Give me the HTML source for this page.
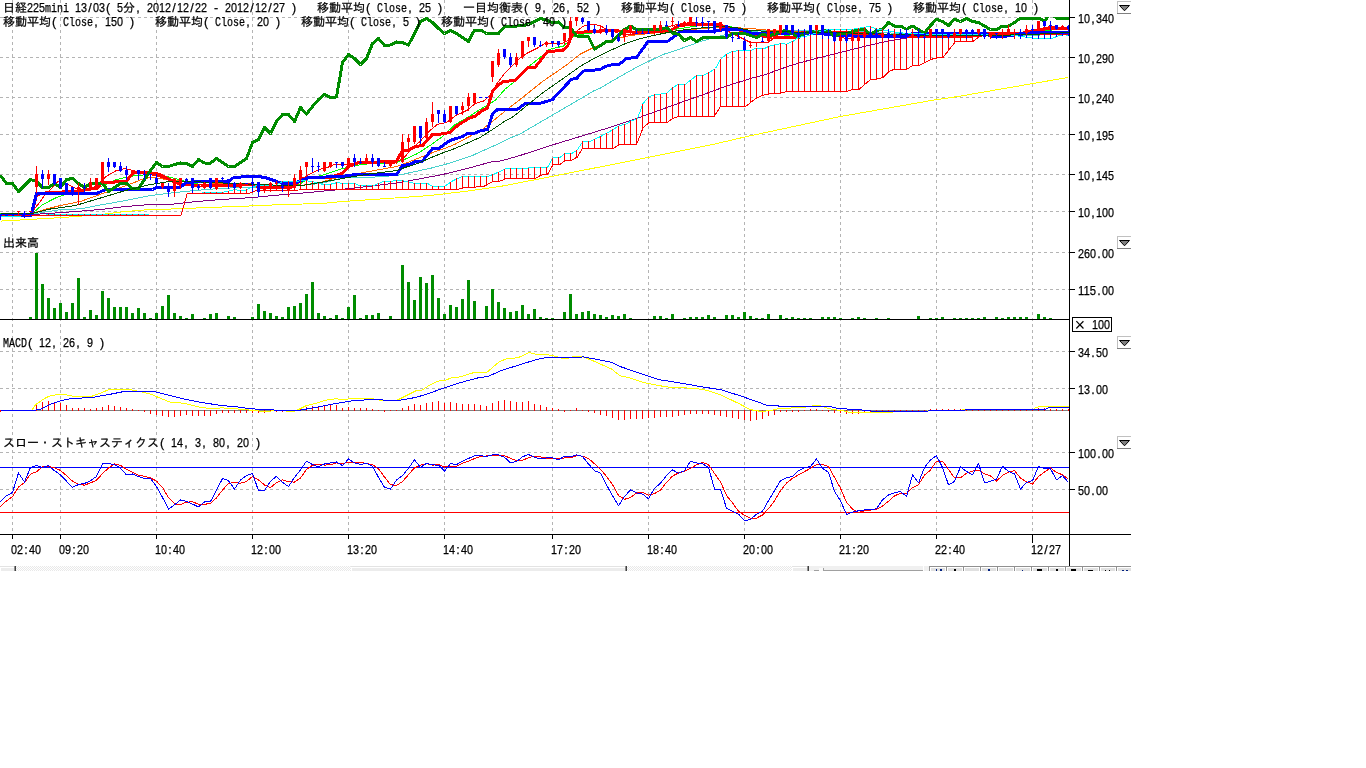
<!DOCTYPE html>
<html lang="ja"><head><meta charset="utf-8"><title>日経225mini 13/03 チャート</title>
<style>
html,body{margin:0;padding:0;background:#fff}
body{width:1366px;height:768px;overflow:hidden;position:relative}
svg{position:absolute;left:0;top:0;display:block}
text{font-family:"Liberation Mono","IPAGothic",monospace;font-size:12px;fill:#000;stroke:#000;stroke-width:.25px}
tspan.x{font-size:18px;stroke-width:0}
tspan.d,tspan.p{font-family:"Liberation Sans","IPAGothic",sans-serif;font-size:12.5px}
</style></head><body>
<svg width="1366" height="768" viewBox="0 0 1366 768">
<defs><clipPath id="all"><rect x="0" y="0" width="1131" height="571"/></clipPath>
<clipPath id="plot"><rect x="0" y="0" width="1069" height="534"/></clipPath>
<clipPath id="main"><rect x="0" y="17" width="1069" height="217"/></clipPath>
<pattern id="chk" width="2" height="2" patternUnits="userSpaceOnUse"><rect width="2" height="2" fill="#fff"/><rect width="1" height="1" fill="#e8e8e8"/><rect x="1" y="1" width="1" height="1" fill="#e8e8e8"/></pattern>
</defs>
<g clip-path="url(#all)">
<g shape-rendering="crispEdges">
<line x1="12.5" y1="0" x2="12.5" y2="534" stroke="#b4b4b4" stroke-width="1" stroke-dasharray="3 3"/>
<line x1="60.5" y1="0" x2="60.5" y2="534" stroke="#b4b4b4" stroke-width="1" stroke-dasharray="3 3"/>
<line x1="156.5" y1="0" x2="156.5" y2="534" stroke="#b4b4b4" stroke-width="1" stroke-dasharray="3 3"/>
<line x1="252.5" y1="0" x2="252.5" y2="534" stroke="#b4b4b4" stroke-width="1" stroke-dasharray="3 3"/>
<line x1="348.5" y1="0" x2="348.5" y2="534" stroke="#b4b4b4" stroke-width="1" stroke-dasharray="3 3"/>
<line x1="444.5" y1="0" x2="444.5" y2="534" stroke="#b4b4b4" stroke-width="1" stroke-dasharray="3 3"/>
<line x1="552.5" y1="0" x2="552.5" y2="534" stroke="#b4b4b4" stroke-width="1" stroke-dasharray="3 3"/>
<line x1="648.5" y1="0" x2="648.5" y2="534" stroke="#b4b4b4" stroke-width="1" stroke-dasharray="3 3"/>
<line x1="744.5" y1="0" x2="744.5" y2="534" stroke="#b4b4b4" stroke-width="1" stroke-dasharray="3 3"/>
<line x1="840.5" y1="0" x2="840.5" y2="534" stroke="#b4b4b4" stroke-width="1" stroke-dasharray="3 3"/>
<line x1="936.5" y1="0" x2="936.5" y2="534" stroke="#b4b4b4" stroke-width="1" stroke-dasharray="3 3"/>
<line x1="1032.5" y1="0" x2="1032.5" y2="534" stroke="#b4b4b4" stroke-width="1" stroke-dasharray="3 3"/>
<line x1="0" y1="17.5" x2="1069" y2="17.5" stroke="#b4b4b4" stroke-width="1" stroke-dasharray="3 3"/>
<line x1="0" y1="57.5" x2="1069" y2="57.5" stroke="#b4b4b4" stroke-width="1" stroke-dasharray="3 3"/>
<line x1="0" y1="97.5" x2="1069" y2="97.5" stroke="#b4b4b4" stroke-width="1" stroke-dasharray="3 3"/>
<line x1="0" y1="134.5" x2="1069" y2="134.5" stroke="#b4b4b4" stroke-width="1" stroke-dasharray="3 3"/>
<line x1="0" y1="174.5" x2="1069" y2="174.5" stroke="#b4b4b4" stroke-width="1" stroke-dasharray="3 3"/>
<line x1="0" y1="211.5" x2="1069" y2="211.5" stroke="#b4b4b4" stroke-width="1" stroke-dasharray="3 3"/>
<line x1="0" y1="252.5" x2="1069" y2="252.5" stroke="#b4b4b4" stroke-width="1" stroke-dasharray="3 3"/>
<line x1="0" y1="289.5" x2="1069" y2="289.5" stroke="#b4b4b4" stroke-width="1" stroke-dasharray="3 3"/>
<line x1="0" y1="351.5" x2="1069" y2="351.5" stroke="#b4b4b4" stroke-width="1" stroke-dasharray="3 3"/>
<line x1="0" y1="388.5" x2="1069" y2="388.5" stroke="#b4b4b4" stroke-width="1" stroke-dasharray="3 3"/>
<line x1="0" y1="452.5" x2="1069" y2="452.5" stroke="#b4b4b4" stroke-width="1" stroke-dasharray="3 3"/>
<line x1="0" y1="489.5" x2="1069" y2="489.5" stroke="#b4b4b4" stroke-width="1" stroke-dasharray="3 3"/>
</g>
<g clip-path="url(#plot)" shape-rendering="crispEdges" stroke-linejoin="round" stroke-linecap="butt">
<g clip-path="url(#main)">
<polyline points="0.5,213.5 34.5,213.5 40.5,212.8 59.1,209.8 80.5,208.8 100.5,205 125.5,200.5 150.5,195.5 171.5,193 184,191.5 196.5,190.5 209,189.25 230.5,188 260.5,187 290.5,186.5 320.5,183.5 342.5,178 367.5,177.5 396.5,175.5 413.9,171.9 431.5,168 445,164.5 470.5,156.3 492.5,146.5 513.5,136.5 519.3,134.4 553,114.8 578.5,99.9 594.5,90.5 600.5,88 613,80.5 625.5,73.5 638,66.5 650.5,60.5 663,54.5 675.5,50.5 688,46.1 700.5,41.5 713,38 725.5,34.5 745.5,31.5 770.5,30.5 800.5,30.5 830.5,31 860.5,31.5 890.5,33 920.5,34 950.5,35 980.5,35.5 1010.5,35.5 1040.5,35 1069.5,34.5" fill="none" stroke="#48d1cc" stroke-width="1" />
<polyline points="0.5,213.5 32.5,213.5 34.5,208.5 38.5,204 44.5,195.5 50.5,189.5 58,181.5 63,182.5 70.5,185.5 75.5,188.5 85.5,189.5 95.5,186.5 100.5,181.5 106.5,176.1 116.5,170.5 125.5,168.5 133,170.5 144.5,173 156.5,176.1 163,178 171.5,179.5 180.5,183.5 190.5,185.5 200.5,186.5 215.5,185.5 230.5,183.5 240.5,184.5 255.5,186.5 268.5,188 285.5,187.5 294.5,185.5 300.5,180.5 309,174.5 319,169.5 327.5,167.5 334,164.5 342.5,164.5 352.5,163.5 365.5,162.5 380.5,163.5 392.5,164 398.5,161.5 405,156.5 412.5,148 420,141.5 430,130.5 437.5,124.25 446.5,122.5 455,116.1 462.5,112.5 468.5,109.5 475,103.5 483.5,101.1 490,95.5 496.5,84.25 505,73 512.5,65.5 520,58 527.5,53 537.5,48 545,43.5 555,43 562.5,43.5 567.5,40.5 572.5,34.5 577.5,30.5 583.5,26.1 592.5,24.25 600,25.5 606.5,29.25 613.5,31.5 622.5,34.5 630.5,34.5 640.5,33.5 652.5,31.5 662.5,28.5 672.5,25.5 682.5,23.5 692.5,22.5 702.5,23.5 712.5,25.5 722.5,28.5 730.5,32.5 740.5,37.5 750.5,42.5 768.5,42.5 775.5,36.5 780.5,33.5 785.5,30.5 800.5,31.5 815.5,31.5 830.5,34.5 845.5,38.5 860.5,37.5 875.5,35.5 890.5,35.5 905.5,36 920.5,36.5 935.5,35.5 950.5,35 965.5,34 980.5,34 995.5,35 1010.5,33.5 1025.5,32.5 1040.5,28.5 1050.5,26.5 1060.5,27.5 1069.5,28.5" fill="none" stroke="#ff0000" stroke-width="1" />
<polyline points="0.5,213.5 33.5,213 44.5,209.5 60.5,205.5 70.5,203.5 81.5,201.1 95.5,196.1 108,191.5 120.5,187.5 133,183 141.5,179.5 150.5,177.5 160.5,178.5 171.5,180.5 185.5,181.5 200.5,182.5 220.5,183.5 240.5,184.5 260.5,185 280.5,185.5 300.5,185.5 320.5,182.5 340.5,176.5 363.5,172.5 380,169.5 396.5,166.5 405,163.5 417.5,158.5 430,153.5 442.5,149.25 455,144.25 467.5,137.5 480,131.1 492.5,121.5 505,111.1 517.5,101.5 530,91.5 542.5,81.5 555,73 567.5,64.25 580,54.25 592.5,48 605,42.5 613.5,39.25 630.5,35.5 650.5,33.5 670.5,31.5 690.5,29.5 710.5,28 730.5,27.5 750.5,28.5 770.5,30.5 790.5,31.5 810.5,32.5 830.5,32.5 850.5,33 870.5,34 890.5,35 910.5,35.5 930.5,35.5 950.5,35.5 970.5,35 990.5,35 1010.5,34.5 1030.5,33.5 1050.5,32.5 1069.5,31.5" fill="none" stroke="#ff6600" stroke-width="1" />
<polyline points="0.5,221.1 33,219.25 63,217.5 100.5,214.5 125.5,211.5 150.5,209.5 171.5,209 209,207.5 246.5,206.1 284,204.5 321.5,203.5 342.5,201.5 380.5,199 430,195.5 467.5,191.1 492.5,187.5 500.5,186.4 552.2,176.4 610.2,164.9 657.2,155.5 688.5,149.25 714.5,144.1 747,136.5 840.5,116.5 903,105.5 934.5,99.9 958,96.5 1033,83.5 1068,77.5" fill="none" stroke="#ffff00" stroke-width="1" />
<polyline points="0.5,213.5 33,213 41.5,205.5 50.5,200.5 56.5,197.5 65.5,194.5 80.5,191.5 95.5,188.5 105.5,184.5 116.5,179.5 125.5,177.5 135.5,175.5 150.5,174.5 160.5,175.5 171.5,177.5 185.5,181.5 200.5,184.5 220.5,185.5 240.5,185 260.5,186 280.5,187.5 295.5,186.5 302.5,182.5 309,178 321.5,175.5 334,171.5 342.5,168.5 355.5,165.5 370.5,163.5 385.5,163 396.5,162.5 405,159.25 417.5,153.5 430,145.5 442.5,136.5 455,124.5 467.5,117.5 480,109.5 485,106.5 495,100.5 505,89.25 517.5,79.25 530,65.5 542.5,55.5 548.5,49.5 563.5,46.1 573.5,36.5 580,34.5 592.5,33 605.5,30.5 620.5,30.5 640.5,32.5 660.5,31.5 680.5,28.5 700.5,25.5 720.5,25.5 735.5,27.5 750.5,31.5 765.5,35.5 780.5,36.5 800.5,33.5 820.5,32.5 840.5,34 860.5,35.5 880.5,36.5 900.5,36 920.5,36 940.5,35.5 960.5,35 980.5,34.5 1000.5,34.5 1020.5,33.5 1040.5,31.5 1055.5,29.5 1069.5,28.5" fill="none" stroke="#00ff00" stroke-width="1" />
<polyline points="0.5,214.5 33,214.5 63,212.5 100.5,209.5 125.5,206.5 150.5,204.5 171.5,204.25 196.5,201.5 221.5,199.5 252.5,197.5 284,194.5 309,192.5 342.5,189.25 367.5,186.5 396.5,183 417.5,179.25 442.5,174.5 467.5,168.5 492.5,161.5 500.5,161 517.5,156.3 552.2,145 583.5,135.5 610.2,127.3 636.5,118.5 672.5,105.5 700.5,95.5 725.5,86.5 750.5,78.5 765.5,74.5 790.5,65.5 815.5,58.5 840.5,52.5 865.5,46.1 890.5,40.5 903,38.5 915.5,36.5 940.5,35.5 970.5,35 1000.5,34.5 1030.5,34 1069.5,33.5" fill="none" stroke="#800080" stroke-width="1" />
<polyline points="30.5,215.5 32.5,211.5 36.5,194.5 48.5,192.5 75.5,191.5 97.5,188 101.5,183 126.5,181.1 133,173 148,172.5 156.5,173.5 163,176.1 171.5,180.5 180.5,184.5 200.5,185.5 230.5,185.5 250.5,184.5 262.5,187.5 290.5,187.5 296.5,183.5 302.5,178.5 308.5,177.5 330.5,177.5 342.5,173 348.5,166.5 357.5,163 361.5,162.5 377.5,162.5 382.5,161.1 396.5,161.1 402.5,150.5 408.5,150.5 415,146.5 422.5,145.5 432.5,134.5 438.5,134.5 450,132.5 457.5,125.5 468.5,118.5 475,116.1 481.5,111.1 487.5,108 492.5,91.5 497.5,85.5 503.5,81.5 515,80.5 527.5,68 535,67.5 547.5,51.5 562.5,50.5 567.5,46.1 572.5,34.25 575,32.5 600.5,31.1 613,30.5 638,32.5 656.5,31.5 670.5,30.5 678,26.1 688,24.25 706.5,24.5 720.5,24.25 725.5,28 737.5,29.5 750.5,33 760.5,35.5 772.5,37.5 795.5,37.5 803.5,34.5 812.5,32 850.5,33 870.5,34 900.5,36.5 970.5,36.5 985.5,33.5 1020.5,33.5 1032.5,31 1040.5,29.8 1050.5,28 1069.5,28" fill="none" stroke="#ff0000" stroke-width="3" />
<polyline points="0.5,215.5 30.5,215.5 31.5,213.5 36.5,193.5 96.5,193.5 104.5,190 152.5,189.5 156.5,187.5 180,187.5 185.5,182.9 191.5,181.9 227.5,181.9 234.2,177.2 259,176.5 266.5,178 274,180.5 280.5,183 294,183.5 301.5,180.5 309,177.5 342.5,176.5 355,174.5 396.5,174.5 402.5,165.5 410,164.5 415,161.5 422.5,161.1 432.5,148.5 438.5,148.5 450,140.5 462.5,136.5 468.5,133 475,133 481.5,130.5 487.5,129.5 492.5,114.25 497.5,109.5 517.5,109.25 525,103.5 541.5,103 552.5,99.5 571.5,79.25 576.5,78.5 583.5,71.1 600,69.5 606.5,66.1 613,64.5 619.25,64.25 626.5,58.5 636.5,57.5 648,41.5 668,41.1 675.5,35.5 680.5,31.5 715.5,31.1 725.5,29.25 741.5,29.5 750.5,33 771.5,33.5 810.5,33 858.5,36.5 905.5,36.5 912.5,33.5 985.5,33.5 990.5,36 1006.5,36 1030.5,33 1035.5,32 1069.5,32" fill="none" stroke="#0000ff" stroke-width="3" />
<polyline points="0.5,175.5 6.5,183.5 12.5,183.5 18.5,191.5 24.5,185.5 30.5,179.5 36.5,181.5 42.5,187.5 48.5,187.5 54.5,183.5 60.5,187.5 66.5,179.5 72.5,178.5 78.5,183.5 84.5,187.5 90.5,183.5 96.5,183.5 102.5,183.5 108.5,191.5 114.5,187.5 120.5,183.5 126.5,183.5 132.5,188.5 138.5,188.5 144.5,179.5 150.5,170.5 156.5,162.5 162.5,166.5 168.5,166.5 174.5,164.5 180.5,163 186.5,163.5 192.5,166.5 198.5,159.5 204.5,163 210.5,163 216.5,158.5 222.5,162.5 228.5,166.5 234.5,166.5 240.5,162.5 246.5,158.5 252.5,142.5 258.5,139.5 264.5,127.5 270.5,133.5 276.5,121.5 282.5,114.5 288.5,114.5 294.5,121.5 300.5,107.5 306.5,114 312.5,106.5 318.5,99.5 324.5,94.5 330.5,97.5 336.5,97 342.5,62.5 348.5,54.5 354.5,58.5 360.5,64.5 366.5,58.5 372.5,43.5 378.5,38.5 384.5,45.5 390.5,45 396.5,42 402.5,42.5 408.5,45 414.5,33.5 420.5,21.5 426.5,18.5 432.5,22.5 438.5,28.5 444.5,33.5 450.5,30.5 456.5,33.5 462.5,37.5 468.5,41.5 474.5,30 480.5,30 486.5,33.5 492.5,33.5 498.5,33.5 504.5,26.5 510.5,26.5 516.5,26.1 522.5,25.5 528.5,24.5 534.5,21.5 540.5,18.5 546.5,20.2 552.5,22.5 558.5,22 564.5,28 570.5,27.5 576.5,36 582.5,36.5 588.5,37 594.5,49 600.5,45.5 606.5,41.5 612.5,41.1 618.5,35.5 624.5,29.5 630.5,26.1 636.5,29.5 642.5,29.5 648.5,29.5 654.5,29.5 660.5,29.5 666.5,27.5 672.5,33 678.5,34.25 684.5,40.5 690.5,37.5 696.5,41.5 702.5,38 708.5,37.5 714.5,37.5 720.5,37.5 726.5,37.5 732.5,33.5 738.5,33.5 744.5,33.5 750.5,35.5 756.5,37.5 762.5,34.25 768.5,35.5 774.5,34.5 780.5,31.5 786.5,30.5 792.5,33.5 798.5,37.5 804.5,33.5 810.5,31.5 816.5,32.5 822.5,31.1 828.5,30.5 834.5,36.5 840.5,33.5 846.5,33.5 852.5,31.5 858.5,30 864.5,29.5 870.5,34.25 876.5,30.5 882.5,29.25 888.5,22.5 894.5,26.1 900.5,26.1 906.5,29.25 912.5,26.1 918.5,29.5 924.5,33 930.5,25.5 936.5,19.25 942.5,21.5 948.5,25.5 954.5,19.25 960.5,21.5 966.5,18.5 972.5,21.5 978.5,22.5 984.5,26.1 990.5,29.5 996.5,29.5 1002.5,26.1 1008.5,26.1 1014.5,22.5 1020.5,18 1026.5,18 1032.5,18 1038.5,18 1044.5,20.9 1050.5,13.5 1056.5,18 1062.5,18 1068.5,18 1074.5,18" fill="none" stroke="#008c00" stroke-width="3" />
<polyline points="45.5,214.5 148.5,214.5" fill="none" stroke="#00ffff" stroke-width="1" />
<polyline points="201.5,192.5 221.5,192.5 229.5,191 234.2,189.5 239.9,190.5 244.5,191 248.5,188.5 253.2,186.5 258,185.5 275.5,185.5 281.5,182 296.5,181.5 302.5,180.5 312.5,181.5 321.5,184.25 330.5,184.25 337.5,182.5 342.5,183.5 355,183.5 358.5,185.5 373.5,185.5 383.5,181.5 392.5,181.1 397.5,180.25 405,181.1 412.5,183 427.5,183.5 432.5,186.1 445,186.1 451.5,181.5 457.5,178.5 462.5,176.5 487.5,176.5 493.5,174.25 500,171.5 505.2,168.8 528.5,168 547.5,167.5 553,157.9 559.2,157.9 564.5,153.9 571,153.9 577.3,150 582.5,141.9 589,141.9 600.5,136.5 613.3,129.5 619.5,125.5 625.5,124.2 631.3,121 637.5,118.5 643,103.5 649.3,96.5 655.5,94.5 666.5,93.5 673,87.5 678,84.5 685.5,84.25 696.5,75.5 703,75.5 709.25,72.5 715.5,68.5 720.5,59.25 726.5,54.25 733,51.1 750.5,50.5 756.5,48 765.5,48 769.5,46.1 781.5,43.5 786.5,44.25 794.5,40.5 798,37.5 806.5,36.1 828,29.25 853,29.25 869.5,26.5 878,29.25 890.5,31.5 903,33 936.5,34.5 980.5,34 1006.9,34.5 1019.5,36.2 1032,38 1052.8,38 1060.5,35.2 1065.3,34.8 1069.5,36.2" fill="none" stroke="#00ffff" stroke-width="1" />
<polyline points="30.5,215.5 180.9,215.5 187.1,193.8 248.5,193.5 253.2,191.9 256.5,190.5 342.5,189.5 457.5,189.5 462.5,188 483.5,186.5 487.5,184.5 492.5,181.5 500.5,181 505.2,179 535,178.5 541.2,175.1 547.5,174.5 553,164.9 559.2,164.9 564.5,161 571,160.5 577.3,157.1 582.5,148.5 613.3,148.5 618.5,145 636.5,144.5 643,128.1 648.5,122.9 667.3,122.5 672.5,118.5 678.3,116.5 714.2,116.5 720.5,106.5 745.5,106.5 756.5,98 765.5,94.25 781.5,93 786.5,91.5 846.5,91.5 853,89.25 859.25,89.25 870.5,79.5 876.5,79.25 883,77.5 889.25,71.5 894.25,69.25 906.5,69.25 913,65.5 919.25,65.5 931.5,59.25 936.5,58 943,57.5 955.5,41.5 973,41.5 979.25,36.5 990.5,34.5 1030.5,34.5 1069.5,34.5" fill="none" stroke="#ff0000" stroke-width="1" />
<line x1="48.5" y1="214" x2="48.5" y2="216" stroke="#ff0000" stroke-width="1"/>
<line x1="54.5" y1="214" x2="54.5" y2="216" stroke="#ff0000" stroke-width="1"/>
<line x1="60.5" y1="214" x2="60.5" y2="216" stroke="#ff0000" stroke-width="1"/>
<line x1="66.5" y1="214" x2="66.5" y2="216" stroke="#ff0000" stroke-width="1"/>
<line x1="72.5" y1="214" x2="72.5" y2="216" stroke="#ff0000" stroke-width="1"/>
<line x1="78.5" y1="214" x2="78.5" y2="216" stroke="#ff0000" stroke-width="1"/>
<line x1="84.5" y1="214" x2="84.5" y2="216" stroke="#ff0000" stroke-width="1"/>
<line x1="90.5" y1="214" x2="90.5" y2="216" stroke="#ff0000" stroke-width="1"/>
<line x1="96.5" y1="214" x2="96.5" y2="216" stroke="#ff0000" stroke-width="1"/>
<line x1="102.5" y1="214" x2="102.5" y2="216" stroke="#ff0000" stroke-width="1"/>
<line x1="108.5" y1="214" x2="108.5" y2="216" stroke="#ff0000" stroke-width="1"/>
<line x1="114.5" y1="214" x2="114.5" y2="216" stroke="#ff0000" stroke-width="1"/>
<line x1="120.5" y1="214" x2="120.5" y2="216" stroke="#ff0000" stroke-width="1"/>
<line x1="126.5" y1="214" x2="126.5" y2="216" stroke="#ff0000" stroke-width="1"/>
<line x1="132.5" y1="214" x2="132.5" y2="216" stroke="#ff0000" stroke-width="1"/>
<line x1="138.5" y1="214" x2="138.5" y2="216" stroke="#ff0000" stroke-width="1"/>
<line x1="144.5" y1="214" x2="144.5" y2="216" stroke="#ff0000" stroke-width="1"/>
<line x1="204.5" y1="192" x2="204.5" y2="194" stroke="#ff0000" stroke-width="1"/>
<line x1="210.5" y1="192" x2="210.5" y2="194" stroke="#ff0000" stroke-width="1"/>
<line x1="216.5" y1="192" x2="216.5" y2="194" stroke="#ff0000" stroke-width="1"/>
<line x1="222.5" y1="192" x2="222.5" y2="194" stroke="#ff0000" stroke-width="1"/>
<line x1="228.5" y1="191" x2="228.5" y2="194" stroke="#ff0000" stroke-width="1"/>
<line x1="234.5" y1="189" x2="234.5" y2="194" stroke="#ff0000" stroke-width="1"/>
<line x1="240.5" y1="190" x2="240.5" y2="194" stroke="#ff0000" stroke-width="1"/>
<line x1="246.5" y1="189" x2="246.5" y2="194" stroke="#ff0000" stroke-width="1"/>
<line x1="252.5" y1="186" x2="252.5" y2="193" stroke="#ff0000" stroke-width="1"/>
<line x1="258.5" y1="185" x2="258.5" y2="191" stroke="#ff0000" stroke-width="1"/>
<line x1="264.5" y1="185" x2="264.5" y2="191" stroke="#ff0000" stroke-width="1"/>
<line x1="270.5" y1="185" x2="270.5" y2="191" stroke="#ff0000" stroke-width="1"/>
<line x1="276.5" y1="184" x2="276.5" y2="191" stroke="#ff0000" stroke-width="1"/>
<line x1="282.5" y1="181" x2="282.5" y2="191" stroke="#ff0000" stroke-width="1"/>
<line x1="288.5" y1="181" x2="288.5" y2="191" stroke="#ff0000" stroke-width="1"/>
<line x1="294.5" y1="181" x2="294.5" y2="191" stroke="#ff0000" stroke-width="1"/>
<line x1="300.5" y1="180" x2="300.5" y2="190" stroke="#ff0000" stroke-width="1"/>
<line x1="306.5" y1="180" x2="306.5" y2="190" stroke="#ff0000" stroke-width="1"/>
<line x1="312.5" y1="181" x2="312.5" y2="190" stroke="#ff0000" stroke-width="1"/>
<line x1="318.5" y1="183" x2="318.5" y2="190" stroke="#ff0000" stroke-width="1"/>
<line x1="324.5" y1="184" x2="324.5" y2="190" stroke="#ff0000" stroke-width="1"/>
<line x1="330.5" y1="184" x2="330.5" y2="190" stroke="#ff0000" stroke-width="1"/>
<line x1="336.5" y1="182" x2="336.5" y2="190" stroke="#ff0000" stroke-width="1"/>
<line x1="342.5" y1="183" x2="342.5" y2="190" stroke="#ff0000" stroke-width="1"/>
<line x1="348.5" y1="183" x2="348.5" y2="190" stroke="#ff0000" stroke-width="1"/>
<line x1="354.5" y1="183" x2="354.5" y2="190" stroke="#ff0000" stroke-width="1"/>
<line x1="360.5" y1="185" x2="360.5" y2="190" stroke="#ff0000" stroke-width="1"/>
<line x1="366.5" y1="185" x2="366.5" y2="190" stroke="#ff0000" stroke-width="1"/>
<line x1="372.5" y1="185" x2="372.5" y2="190" stroke="#ff0000" stroke-width="1"/>
<line x1="378.5" y1="183" x2="378.5" y2="190" stroke="#ff0000" stroke-width="1"/>
<line x1="384.5" y1="181" x2="384.5" y2="190" stroke="#ff0000" stroke-width="1"/>
<line x1="390.5" y1="181" x2="390.5" y2="190" stroke="#ff0000" stroke-width="1"/>
<line x1="396.5" y1="180" x2="396.5" y2="190" stroke="#ff0000" stroke-width="1"/>
<line x1="402.5" y1="180" x2="402.5" y2="190" stroke="#ff0000" stroke-width="1"/>
<line x1="408.5" y1="181" x2="408.5" y2="190" stroke="#ff0000" stroke-width="1"/>
<line x1="414.5" y1="183" x2="414.5" y2="190" stroke="#ff0000" stroke-width="1"/>
<line x1="420.5" y1="183" x2="420.5" y2="190" stroke="#ff0000" stroke-width="1"/>
<line x1="426.5" y1="183" x2="426.5" y2="190" stroke="#ff0000" stroke-width="1"/>
<line x1="432.5" y1="186" x2="432.5" y2="190" stroke="#ff0000" stroke-width="1"/>
<line x1="438.5" y1="186" x2="438.5" y2="190" stroke="#ff0000" stroke-width="1"/>
<line x1="444.5" y1="186" x2="444.5" y2="190" stroke="#ff0000" stroke-width="1"/>
<line x1="450.5" y1="182" x2="450.5" y2="190" stroke="#ff0000" stroke-width="1"/>
<line x1="456.5" y1="178" x2="456.5" y2="190" stroke="#ff0000" stroke-width="1"/>
<line x1="462.5" y1="176" x2="462.5" y2="189" stroke="#ff0000" stroke-width="1"/>
<line x1="468.5" y1="176" x2="468.5" y2="188" stroke="#ff0000" stroke-width="1"/>
<line x1="474.5" y1="176" x2="474.5" y2="188" stroke="#ff0000" stroke-width="1"/>
<line x1="480.5" y1="176" x2="480.5" y2="187" stroke="#ff0000" stroke-width="1"/>
<line x1="486.5" y1="176" x2="486.5" y2="185" stroke="#ff0000" stroke-width="1"/>
<line x1="492.5" y1="174" x2="492.5" y2="182" stroke="#ff0000" stroke-width="1"/>
<line x1="498.5" y1="172" x2="498.5" y2="182" stroke="#ff0000" stroke-width="1"/>
<line x1="504.5" y1="169" x2="504.5" y2="180" stroke="#ff0000" stroke-width="1"/>
<line x1="510.5" y1="168" x2="510.5" y2="179" stroke="#ff0000" stroke-width="1"/>
<line x1="516.5" y1="168" x2="516.5" y2="179" stroke="#ff0000" stroke-width="1"/>
<line x1="522.5" y1="168" x2="522.5" y2="179" stroke="#ff0000" stroke-width="1"/>
<line x1="528.5" y1="168" x2="528.5" y2="179" stroke="#ff0000" stroke-width="1"/>
<line x1="534.5" y1="167" x2="534.5" y2="179" stroke="#ff0000" stroke-width="1"/>
<line x1="540.5" y1="167" x2="540.5" y2="176" stroke="#ff0000" stroke-width="1"/>
<line x1="546.5" y1="167" x2="546.5" y2="175" stroke="#ff0000" stroke-width="1"/>
<line x1="552.5" y1="158" x2="552.5" y2="166" stroke="#ff0000" stroke-width="1"/>
<line x1="558.5" y1="157" x2="558.5" y2="165" stroke="#ff0000" stroke-width="1"/>
<line x1="564.5" y1="153" x2="564.5" y2="161" stroke="#ff0000" stroke-width="1"/>
<line x1="570.5" y1="153" x2="570.5" y2="161" stroke="#ff0000" stroke-width="1"/>
<line x1="576.5" y1="150" x2="576.5" y2="158" stroke="#ff0000" stroke-width="1"/>
<line x1="582.5" y1="141" x2="582.5" y2="149" stroke="#ff0000" stroke-width="1"/>
<line x1="588.5" y1="141" x2="588.5" y2="149" stroke="#ff0000" stroke-width="1"/>
<line x1="594.5" y1="139" x2="594.5" y2="149" stroke="#ff0000" stroke-width="1"/>
<line x1="600.5" y1="136" x2="600.5" y2="149" stroke="#ff0000" stroke-width="1"/>
<line x1="606.5" y1="133" x2="606.5" y2="149" stroke="#ff0000" stroke-width="1"/>
<line x1="612.5" y1="129" x2="612.5" y2="149" stroke="#ff0000" stroke-width="1"/>
<line x1="618.5" y1="126" x2="618.5" y2="145" stroke="#ff0000" stroke-width="1"/>
<line x1="624.5" y1="124" x2="624.5" y2="145" stroke="#ff0000" stroke-width="1"/>
<line x1="630.5" y1="121" x2="630.5" y2="145" stroke="#ff0000" stroke-width="1"/>
<line x1="636.5" y1="118" x2="636.5" y2="145" stroke="#ff0000" stroke-width="1"/>
<line x1="642.5" y1="104" x2="642.5" y2="130" stroke="#ff0000" stroke-width="1"/>
<line x1="648.5" y1="97" x2="648.5" y2="123" stroke="#ff0000" stroke-width="1"/>
<line x1="654.5" y1="94" x2="654.5" y2="123" stroke="#ff0000" stroke-width="1"/>
<line x1="660.5" y1="94" x2="660.5" y2="123" stroke="#ff0000" stroke-width="1"/>
<line x1="666.5" y1="93" x2="666.5" y2="123" stroke="#ff0000" stroke-width="1"/>
<line x1="672.5" y1="87" x2="672.5" y2="119" stroke="#ff0000" stroke-width="1"/>
<line x1="678.5" y1="84" x2="678.5" y2="117" stroke="#ff0000" stroke-width="1"/>
<line x1="684.5" y1="84" x2="684.5" y2="117" stroke="#ff0000" stroke-width="1"/>
<line x1="690.5" y1="80" x2="690.5" y2="117" stroke="#ff0000" stroke-width="1"/>
<line x1="696.5" y1="75" x2="696.5" y2="117" stroke="#ff0000" stroke-width="1"/>
<line x1="702.5" y1="75" x2="702.5" y2="117" stroke="#ff0000" stroke-width="1"/>
<line x1="708.5" y1="72" x2="708.5" y2="117" stroke="#ff0000" stroke-width="1"/>
<line x1="714.5" y1="69" x2="714.5" y2="117" stroke="#ff0000" stroke-width="1"/>
<line x1="720.5" y1="59" x2="720.5" y2="107" stroke="#ff0000" stroke-width="1"/>
<line x1="726.5" y1="54" x2="726.5" y2="107" stroke="#ff0000" stroke-width="1"/>
<line x1="732.5" y1="51" x2="732.5" y2="107" stroke="#ff0000" stroke-width="1"/>
<line x1="738.5" y1="50" x2="738.5" y2="107" stroke="#ff0000" stroke-width="1"/>
<line x1="744.5" y1="50" x2="744.5" y2="107" stroke="#ff0000" stroke-width="1"/>
<line x1="750.5" y1="50" x2="750.5" y2="103" stroke="#ff0000" stroke-width="1"/>
<line x1="756.5" y1="48" x2="756.5" y2="99" stroke="#ff0000" stroke-width="1"/>
<line x1="762.5" y1="48" x2="762.5" y2="96" stroke="#ff0000" stroke-width="1"/>
<line x1="768.5" y1="46" x2="768.5" y2="95" stroke="#ff0000" stroke-width="1"/>
<line x1="774.5" y1="45" x2="774.5" y2="94" stroke="#ff0000" stroke-width="1"/>
<line x1="780.5" y1="43" x2="780.5" y2="94" stroke="#ff0000" stroke-width="1"/>
<line x1="786.5" y1="44" x2="786.5" y2="92" stroke="#ff0000" stroke-width="1"/>
<line x1="792.5" y1="41" x2="792.5" y2="92" stroke="#ff0000" stroke-width="1"/>
<line x1="798.5" y1="37" x2="798.5" y2="92" stroke="#ff0000" stroke-width="1"/>
<line x1="804.5" y1="36" x2="804.5" y2="92" stroke="#ff0000" stroke-width="1"/>
<line x1="810.5" y1="34" x2="810.5" y2="92" stroke="#ff0000" stroke-width="1"/>
<line x1="816.5" y1="32" x2="816.5" y2="92" stroke="#ff0000" stroke-width="1"/>
<line x1="822.5" y1="31" x2="822.5" y2="92" stroke="#ff0000" stroke-width="1"/>
<line x1="828.5" y1="29" x2="828.5" y2="92" stroke="#ff0000" stroke-width="1"/>
<line x1="834.5" y1="29" x2="834.5" y2="92" stroke="#ff0000" stroke-width="1"/>
<line x1="840.5" y1="29" x2="840.5" y2="92" stroke="#ff0000" stroke-width="1"/>
<line x1="846.5" y1="29" x2="846.5" y2="92" stroke="#ff0000" stroke-width="1"/>
<line x1="852.5" y1="29" x2="852.5" y2="90" stroke="#ff0000" stroke-width="1"/>
<line x1="858.5" y1="28" x2="858.5" y2="90" stroke="#ff0000" stroke-width="1"/>
<line x1="864.5" y1="27" x2="864.5" y2="85" stroke="#ff0000" stroke-width="1"/>
<line x1="870.5" y1="26" x2="870.5" y2="80" stroke="#ff0000" stroke-width="1"/>
<line x1="876.5" y1="28" x2="876.5" y2="80" stroke="#ff0000" stroke-width="1"/>
<line x1="882.5" y1="30" x2="882.5" y2="78" stroke="#ff0000" stroke-width="1"/>
<line x1="888.5" y1="31" x2="888.5" y2="73" stroke="#ff0000" stroke-width="1"/>
<line x1="894.5" y1="31" x2="894.5" y2="70" stroke="#ff0000" stroke-width="1"/>
<line x1="900.5" y1="32" x2="900.5" y2="70" stroke="#ff0000" stroke-width="1"/>
<line x1="906.5" y1="33" x2="906.5" y2="70" stroke="#ff0000" stroke-width="1"/>
<line x1="912.5" y1="33" x2="912.5" y2="66" stroke="#ff0000" stroke-width="1"/>
<line x1="918.5" y1="33" x2="918.5" y2="66" stroke="#ff0000" stroke-width="1"/>
<line x1="924.5" y1="33" x2="924.5" y2="63" stroke="#ff0000" stroke-width="1"/>
<line x1="930.5" y1="34" x2="930.5" y2="60" stroke="#ff0000" stroke-width="1"/>
<line x1="936.5" y1="34" x2="936.5" y2="59" stroke="#ff0000" stroke-width="1"/>
<line x1="942.5" y1="34" x2="942.5" y2="58" stroke="#ff0000" stroke-width="1"/>
<line x1="948.5" y1="34" x2="948.5" y2="51" stroke="#ff0000" stroke-width="1"/>
<line x1="954.5" y1="34" x2="954.5" y2="43" stroke="#ff0000" stroke-width="1"/>
<line x1="960.5" y1="34" x2="960.5" y2="42" stroke="#ff0000" stroke-width="1"/>
<line x1="966.5" y1="34" x2="966.5" y2="42" stroke="#ff0000" stroke-width="1"/>
<line x1="972.5" y1="34" x2="972.5" y2="42" stroke="#ff0000" stroke-width="1"/>
<line x1="978.5" y1="34" x2="978.5" y2="38" stroke="#ff0000" stroke-width="1"/>
<line x1="984.5" y1="34" x2="984.5" y2="36" stroke="#ff0000" stroke-width="1"/>
<line x1="1014.5" y1="34" x2="1014.5" y2="36" stroke="#0000ff" stroke-width="1"/>
<line x1="1020.5" y1="34" x2="1020.5" y2="37" stroke="#0000ff" stroke-width="1"/>
<line x1="1026.5" y1="34" x2="1026.5" y2="38" stroke="#0000ff" stroke-width="1"/>
<line x1="1032.5" y1="34" x2="1032.5" y2="39" stroke="#0000ff" stroke-width="1"/>
<line x1="1038.5" y1="34" x2="1038.5" y2="39" stroke="#0000ff" stroke-width="1"/>
<line x1="1044.5" y1="34" x2="1044.5" y2="39" stroke="#0000ff" stroke-width="1"/>
<line x1="1050.5" y1="34" x2="1050.5" y2="39" stroke="#0000ff" stroke-width="1"/>
<line x1="1056.5" y1="34" x2="1056.5" y2="37" stroke="#0000ff" stroke-width="1"/>
<line x1="1062.5" y1="34" x2="1062.5" y2="36" stroke="#0000ff" stroke-width="1"/>
<line x1="1068.5" y1="34" x2="1068.5" y2="36" stroke="#0000ff" stroke-width="1"/>
<polyline points="0.5,213.2 33.5,213.2 50.5,209 75.5,205.5 100.5,198 125.5,190.5 150.5,184.5 163,182.5 171.5,181.1 190.5,181.5 210.5,182.5 235.5,183.5 260.5,184.5 285.5,185.5 305.5,185 325.5,181.5 342.5,178.5 367.5,174.25 396.5,170.5 405,167.5 417.5,163.5 430,158 442.5,153 455,148.5 467.5,143 480,137.5 492.5,129.5 505,121.1 513.5,116.5 530,103 542.5,93 555,84.25 567.5,75.5 580,66.5 592.5,59.25 605,53 613,49.25 625.5,43.5 638,39.25 650.5,36.1 663,33.5 675.5,31.1 688,29.25 706.5,27.5 725.5,26.5 738,28 750.5,30.5 770.5,31.5 790.5,32 810.5,32.5 830.5,32.5 850.5,33 870.5,33.5 890.5,34.5 910.5,35 930.5,35.5 950.5,35.5 970.5,35.5 990.5,35 1010.5,35 1030.5,34.5 1050.5,33.5 1069.5,32.5" fill="none" stroke="#005000" stroke-width="1" />
<line x1="0.5" y1="214" x2="0.5" y2="220" stroke="#0000ff" stroke-width="1"/>
<line x1="1" y1="216.5" x2="21" y2="216.5" stroke="#00ffff" stroke-width="1"/>
<line x1="2" y1="215.5" x2="31" y2="215.5" stroke="#ff0000" stroke-width="1" stroke-dasharray="3 3 4 2 8 3 5 1"/>
<line x1="18.5" y1="211" x2="18.5" y2="216" stroke="#ff0000" stroke-width="1"/>
<rect x="17" y="211" width="3" height="1" fill="#ff0000"/>
<line x1="24.5" y1="211" x2="24.5" y2="218" stroke="#0000ff" stroke-width="1"/>
<rect x="23" y="213" width="3" height="2" fill="#0000ff"/>
<line x1="30.5" y1="211" x2="30.5" y2="212" stroke="#ff0000" stroke-width="1"/>
<rect x="29" y="211" width="3" height="1" fill="#ff0000"/>
<line x1="36.5" y1="166" x2="36.5" y2="193" stroke="#ff0000" stroke-width="1"/>
<rect x="35" y="174" width="3" height="13" fill="#ff0000"/>
<line x1="42.5" y1="170" x2="42.5" y2="188" stroke="#0000ff" stroke-width="1"/>
<rect x="41" y="174" width="3" height="5" fill="#0000ff"/>
<line x1="48.5" y1="170" x2="48.5" y2="185" stroke="#ff0000" stroke-width="1"/>
<rect x="47" y="174" width="3" height="5" fill="#ff0000"/>
<line x1="54.5" y1="174" x2="54.5" y2="185" stroke="#0000ff" stroke-width="1"/>
<rect x="53" y="174" width="3" height="10" fill="#0000ff"/>
<line x1="60.5" y1="178" x2="60.5" y2="189" stroke="#0000ff" stroke-width="1"/>
<rect x="59" y="178" width="3" height="10" fill="#0000ff"/>
<line x1="66.5" y1="183" x2="66.5" y2="193" stroke="#0000ff" stroke-width="1"/>
<rect x="65" y="183" width="3" height="9" fill="#0000ff"/>
<line x1="72.5" y1="187" x2="72.5" y2="196" stroke="#0000ff" stroke-width="1"/>
<rect x="71" y="187" width="3" height="8" fill="#0000ff"/>
<line x1="78.5" y1="183" x2="78.5" y2="205" stroke="#ff0000" stroke-width="1"/>
<rect x="77" y="187" width="3" height="3" fill="#ff0000"/>
<line x1="84.5" y1="183" x2="84.5" y2="193" stroke="#0000ff" stroke-width="1"/>
<rect x="83" y="187" width="3" height="1" fill="#0000ff"/>
<line x1="90.5" y1="178" x2="90.5" y2="190" stroke="#ff0000" stroke-width="1"/>
<rect x="89" y="182" width="3" height="6" fill="#ff0000"/>
<line x1="96.5" y1="178" x2="96.5" y2="189" stroke="#ff0000" stroke-width="1"/>
<rect x="95" y="178" width="3" height="10" fill="#ff0000"/>
<line x1="102.5" y1="162" x2="102.5" y2="184" stroke="#ff0000" stroke-width="1"/>
<rect x="101" y="162" width="3" height="21" fill="#ff0000"/>
<line x1="108.5" y1="158" x2="108.5" y2="172" stroke="#0000ff" stroke-width="1"/>
<rect x="107" y="162" width="3" height="5" fill="#0000ff"/>
<line x1="114.5" y1="162" x2="114.5" y2="168" stroke="#0000ff" stroke-width="1"/>
<rect x="113" y="162" width="3" height="5" fill="#0000ff"/>
<line x1="120.5" y1="162" x2="120.5" y2="172" stroke="#0000ff" stroke-width="1"/>
<rect x="119" y="166" width="3" height="5" fill="#0000ff"/>
<line x1="126.5" y1="166" x2="126.5" y2="180" stroke="#0000ff" stroke-width="1"/>
<rect x="125" y="170" width="3" height="5" fill="#0000ff"/>
<line x1="132.5" y1="170" x2="132.5" y2="176" stroke="#ff0000" stroke-width="1"/>
<rect x="131" y="170" width="3" height="4" fill="#ff0000"/>
<line x1="138.5" y1="170" x2="138.5" y2="180" stroke="#0000ff" stroke-width="1"/>
<rect x="137" y="170" width="3" height="4" fill="#0000ff"/>
<line x1="144.5" y1="170" x2="144.5" y2="180" stroke="#0000ff" stroke-width="1"/>
<rect x="143" y="174" width="3" height="1" fill="#0000ff"/>
<line x1="150.5" y1="174" x2="150.5" y2="180" stroke="#0000ff" stroke-width="1"/>
<rect x="149" y="174" width="3" height="1" fill="#0000ff"/>
<line x1="156.5" y1="174" x2="156.5" y2="188" stroke="#0000ff" stroke-width="1"/>
<rect x="155" y="178" width="3" height="5" fill="#0000ff"/>
<line x1="162.5" y1="183" x2="162.5" y2="189" stroke="#ff0000" stroke-width="1"/>
<rect x="161" y="183" width="3" height="4" fill="#ff0000"/>
<line x1="168.5" y1="183" x2="168.5" y2="197" stroke="#0000ff" stroke-width="1"/>
<rect x="167" y="187" width="3" height="5" fill="#0000ff"/>
<line x1="174.5" y1="178" x2="174.5" y2="197" stroke="#ff0000" stroke-width="1"/>
<rect x="173" y="179" width="3" height="12" fill="#ff0000"/>
<line x1="180.5" y1="178" x2="180.5" y2="189" stroke="#ff0000" stroke-width="1"/>
<rect x="179" y="178" width="3" height="5" fill="#ff0000"/>
<line x1="186.5" y1="178" x2="186.5" y2="183" stroke="#0000ff" stroke-width="1"/>
<rect x="185" y="179" width="3" height="2" fill="#0000ff"/>
<line x1="192.5" y1="178" x2="192.5" y2="193" stroke="#0000ff" stroke-width="1"/>
<rect x="191" y="178" width="3" height="10" fill="#0000ff"/>
<line x1="198.5" y1="184" x2="198.5" y2="190" stroke="#0000ff" stroke-width="1"/>
<rect x="197" y="186" width="3" height="2" fill="#0000ff"/>
<line x1="204.5" y1="182" x2="204.5" y2="189" stroke="#ff0000" stroke-width="1"/>
<rect x="203" y="183" width="3" height="5" fill="#ff0000"/>
<line x1="210.5" y1="178" x2="210.5" y2="189" stroke="#0000ff" stroke-width="1"/>
<rect x="209" y="178" width="3" height="10" fill="#0000ff"/>
<line x1="216.5" y1="178" x2="216.5" y2="190" stroke="#ff0000" stroke-width="1"/>
<rect x="215" y="178" width="3" height="11" fill="#ff0000"/>
<line x1="222.5" y1="177" x2="222.5" y2="182" stroke="#0000ff" stroke-width="1"/>
<rect x="221" y="178" width="3" height="1" fill="#0000ff"/>
<line x1="228.5" y1="179" x2="228.5" y2="189" stroke="#0000ff" stroke-width="1"/>
<rect x="227" y="179" width="3" height="4" fill="#0000ff"/>
<line x1="234.5" y1="182" x2="234.5" y2="189" stroke="#0000ff" stroke-width="1"/>
<rect x="233" y="183" width="3" height="5" fill="#0000ff"/>
<line x1="240.5" y1="182" x2="240.5" y2="189" stroke="#ff0000" stroke-width="1"/>
<rect x="239" y="183" width="3" height="5" fill="#ff0000"/>
<line x1="246.5" y1="183" x2="246.5" y2="184" stroke="#0000ff" stroke-width="1"/>
<rect x="245" y="183" width="3" height="1" fill="#0000ff"/>
<line x1="252.5" y1="176" x2="252.5" y2="192" stroke="#0000ff" stroke-width="1"/>
<rect x="251" y="182" width="3" height="2" fill="#0000ff"/>
<line x1="258.5" y1="182" x2="258.5" y2="197" stroke="#0000ff" stroke-width="1"/>
<rect x="257" y="182" width="3" height="10" fill="#0000ff"/>
<line x1="264.5" y1="186" x2="264.5" y2="193" stroke="#ff0000" stroke-width="1"/>
<rect x="263" y="187" width="3" height="4" fill="#ff0000"/>
<line x1="270.5" y1="182" x2="270.5" y2="192" stroke="#ff0000" stroke-width="1"/>
<rect x="269" y="183" width="3" height="4" fill="#ff0000"/>
<line x1="276.5" y1="181" x2="276.5" y2="188" stroke="#ff0000" stroke-width="1"/>
<rect x="275" y="183" width="3" height="1" fill="#ff0000"/>
<line x1="282.5" y1="182" x2="282.5" y2="192" stroke="#0000ff" stroke-width="1"/>
<rect x="281" y="186" width="3" height="2" fill="#0000ff"/>
<line x1="288.5" y1="181" x2="288.5" y2="197" stroke="#ff0000" stroke-width="1"/>
<rect x="287" y="188" width="3" height="3" fill="#ff0000"/>
<line x1="294.5" y1="174" x2="294.5" y2="189" stroke="#ff0000" stroke-width="1"/>
<rect x="293" y="178" width="3" height="10" fill="#ff0000"/>
<line x1="300.5" y1="166" x2="300.5" y2="180" stroke="#ff0000" stroke-width="1"/>
<rect x="299" y="170" width="3" height="9" fill="#ff0000"/>
<line x1="306.5" y1="162" x2="306.5" y2="176" stroke="#ff0000" stroke-width="1"/>
<rect x="305" y="162" width="3" height="5" fill="#ff0000"/>
<line x1="312.5" y1="158" x2="312.5" y2="172" stroke="#0000ff" stroke-width="1"/>
<rect x="311" y="166" width="3" height="1" fill="#0000ff"/>
<line x1="318.5" y1="162" x2="318.5" y2="172" stroke="#0000ff" stroke-width="1"/>
<rect x="317" y="166" width="3" height="1" fill="#0000ff"/>
<line x1="324.5" y1="162" x2="324.5" y2="172" stroke="#ff0000" stroke-width="1"/>
<rect x="323" y="162" width="3" height="9" fill="#ff0000"/>
<line x1="330.5" y1="162" x2="330.5" y2="168" stroke="#ff0000" stroke-width="1"/>
<rect x="329" y="162" width="3" height="5" fill="#ff0000"/>
<line x1="336.5" y1="162" x2="336.5" y2="168" stroke="#0000ff" stroke-width="1"/>
<rect x="335" y="162" width="3" height="1" fill="#0000ff"/>
<line x1="342.5" y1="162" x2="342.5" y2="168" stroke="#0000ff" stroke-width="1"/>
<rect x="341" y="162" width="3" height="4" fill="#0000ff"/>
<line x1="348.5" y1="158" x2="348.5" y2="168" stroke="#ff0000" stroke-width="1"/>
<rect x="347" y="158" width="3" height="8" fill="#ff0000"/>
<line x1="354.5" y1="154" x2="354.5" y2="167" stroke="#0000ff" stroke-width="1"/>
<rect x="353" y="158" width="3" height="4" fill="#0000ff"/>
<line x1="360.5" y1="158" x2="360.5" y2="164" stroke="#0000ff" stroke-width="1"/>
<rect x="359" y="162" width="3" height="1" fill="#0000ff"/>
<line x1="366.5" y1="154" x2="366.5" y2="164" stroke="#ff0000" stroke-width="1"/>
<rect x="365" y="158" width="3" height="4" fill="#ff0000"/>
<line x1="372.5" y1="154" x2="372.5" y2="167" stroke="#0000ff" stroke-width="1"/>
<rect x="371" y="158" width="3" height="4" fill="#0000ff"/>
<line x1="378.5" y1="158" x2="378.5" y2="167" stroke="#0000ff" stroke-width="1"/>
<rect x="377" y="158" width="3" height="8" fill="#0000ff"/>
<line x1="384.5" y1="162" x2="384.5" y2="167" stroke="#0000ff" stroke-width="1"/>
<rect x="383" y="166" width="3" height="1" fill="#0000ff"/>
<line x1="390.5" y1="162" x2="390.5" y2="167" stroke="#ff0000" stroke-width="1"/>
<rect x="389" y="162" width="3" height="4" fill="#ff0000"/>
<line x1="396.5" y1="158" x2="396.5" y2="164" stroke="#ff0000" stroke-width="1"/>
<rect x="395" y="161" width="3" height="1" fill="#ff0000"/>
<line x1="402.5" y1="134" x2="402.5" y2="163" stroke="#ff0000" stroke-width="1"/>
<rect x="401" y="142" width="3" height="20" fill="#ff0000"/>
<line x1="408.5" y1="134" x2="408.5" y2="151" stroke="#ff0000" stroke-width="1"/>
<rect x="407" y="138" width="3" height="4" fill="#ff0000"/>
<line x1="414.5" y1="126" x2="414.5" y2="144" stroke="#ff0000" stroke-width="1"/>
<rect x="413" y="126" width="3" height="16" fill="#ff0000"/>
<line x1="420.5" y1="126" x2="420.5" y2="144" stroke="#0000ff" stroke-width="1"/>
<rect x="419" y="126" width="3" height="12" fill="#0000ff"/>
<line x1="426.5" y1="118" x2="426.5" y2="139" stroke="#ff0000" stroke-width="1"/>
<rect x="425" y="122" width="3" height="16" fill="#ff0000"/>
<line x1="432.5" y1="102" x2="432.5" y2="127" stroke="#ff0000" stroke-width="1"/>
<rect x="431" y="114" width="3" height="8" fill="#ff0000"/>
<line x1="438.5" y1="110" x2="438.5" y2="123" stroke="#0000ff" stroke-width="1"/>
<rect x="437" y="110" width="3" height="4" fill="#0000ff"/>
<line x1="444.5" y1="110" x2="444.5" y2="123" stroke="#0000ff" stroke-width="1"/>
<rect x="443" y="114" width="3" height="8" fill="#0000ff"/>
<line x1="450.5" y1="106" x2="450.5" y2="123" stroke="#ff0000" stroke-width="1"/>
<rect x="449" y="106" width="3" height="16" fill="#ff0000"/>
<line x1="456.5" y1="106" x2="456.5" y2="115" stroke="#0000ff" stroke-width="1"/>
<rect x="455" y="106" width="3" height="8" fill="#0000ff"/>
<line x1="462.5" y1="102" x2="462.5" y2="115" stroke="#ff0000" stroke-width="1"/>
<rect x="461" y="106" width="3" height="4" fill="#ff0000"/>
<line x1="468.5" y1="93" x2="468.5" y2="111" stroke="#ff0000" stroke-width="1"/>
<rect x="467" y="97" width="3" height="9" fill="#ff0000"/>
<line x1="474.5" y1="93" x2="474.5" y2="104" stroke="#ff0000" stroke-width="1"/>
<rect x="473" y="93" width="3" height="10" fill="#ff0000"/>
<line x1="480.5" y1="97" x2="480.5" y2="98" stroke="#0000ff" stroke-width="1"/>
<rect x="479" y="97" width="3" height="1" fill="#0000ff"/>
<line x1="486.5" y1="97" x2="486.5" y2="98" stroke="#0000ff" stroke-width="1"/>
<rect x="485" y="97" width="3" height="1" fill="#0000ff"/>
<line x1="492.5" y1="61" x2="492.5" y2="82" stroke="#ff0000" stroke-width="1"/>
<rect x="491" y="61" width="3" height="16" fill="#ff0000"/>
<line x1="498.5" y1="49" x2="498.5" y2="67" stroke="#ff0000" stroke-width="1"/>
<rect x="497" y="53" width="3" height="12" fill="#ff0000"/>
<line x1="504.5" y1="49" x2="504.5" y2="59" stroke="#0000ff" stroke-width="1"/>
<rect x="503" y="49" width="3" height="8" fill="#0000ff"/>
<line x1="510.5" y1="53" x2="510.5" y2="67" stroke="#0000ff" stroke-width="1"/>
<rect x="509" y="57" width="3" height="8" fill="#0000ff"/>
<line x1="516.5" y1="53" x2="516.5" y2="67" stroke="#ff0000" stroke-width="1"/>
<rect x="515" y="57" width="3" height="8" fill="#ff0000"/>
<line x1="522.5" y1="41" x2="522.5" y2="59" stroke="#ff0000" stroke-width="1"/>
<rect x="521" y="41" width="3" height="16" fill="#ff0000"/>
<line x1="528.5" y1="37" x2="528.5" y2="47" stroke="#ff0000" stroke-width="1"/>
<rect x="527" y="37" width="3" height="4" fill="#ff0000"/>
<line x1="534.5" y1="37" x2="534.5" y2="47" stroke="#0000ff" stroke-width="1"/>
<rect x="533" y="37" width="3" height="8" fill="#0000ff"/>
<line x1="540.5" y1="41" x2="540.5" y2="47" stroke="#0000ff" stroke-width="1"/>
<rect x="539" y="45" width="3" height="1" fill="#0000ff"/>
<line x1="546.5" y1="41" x2="546.5" y2="47" stroke="#ff0000" stroke-width="1"/>
<rect x="545" y="42" width="3" height="3" fill="#ff0000"/>
<line x1="552.5" y1="41" x2="552.5" y2="47" stroke="#0000ff" stroke-width="1"/>
<rect x="551" y="41" width="3" height="2" fill="#0000ff"/>
<line x1="558.5" y1="41" x2="558.5" y2="47" stroke="#0000ff" stroke-width="1"/>
<rect x="557" y="41" width="3" height="4" fill="#0000ff"/>
<line x1="564.5" y1="33" x2="564.5" y2="45" stroke="#ff0000" stroke-width="1"/>
<rect x="563" y="33" width="3" height="8" fill="#ff0000"/>
<line x1="570.5" y1="17" x2="570.5" y2="39" stroke="#ff0000" stroke-width="1"/>
<rect x="569" y="21" width="3" height="16" fill="#ff0000"/>
<line x1="576.5" y1="17" x2="576.5" y2="26" stroke="#ff0000" stroke-width="1"/>
<rect x="575" y="17" width="3" height="4" fill="#ff0000"/>
<line x1="582.5" y1="17" x2="582.5" y2="24" stroke="#0000ff" stroke-width="1"/>
<rect x="581" y="18" width="3" height="4" fill="#0000ff"/>
<line x1="588.5" y1="21" x2="588.5" y2="31" stroke="#0000ff" stroke-width="1"/>
<rect x="587" y="21" width="3" height="9" fill="#0000ff"/>
<line x1="594.5" y1="25" x2="594.5" y2="34" stroke="#0000ff" stroke-width="1"/>
<rect x="593" y="29" width="3" height="4" fill="#0000ff"/>
<line x1="600.5" y1="25" x2="600.5" y2="34" stroke="#ff0000" stroke-width="1"/>
<rect x="599" y="29" width="3" height="4" fill="#ff0000"/>
<line x1="606.5" y1="25" x2="606.5" y2="35" stroke="#0000ff" stroke-width="1"/>
<rect x="605" y="29" width="3" height="4" fill="#0000ff"/>
<line x1="612.5" y1="29" x2="612.5" y2="39" stroke="#0000ff" stroke-width="1"/>
<rect x="611" y="29" width="3" height="8" fill="#0000ff"/>
<line x1="618.5" y1="33" x2="618.5" y2="42" stroke="#0000ff" stroke-width="1"/>
<rect x="617" y="37" width="3" height="4" fill="#0000ff"/>
<line x1="624.5" y1="29" x2="624.5" y2="42" stroke="#ff0000" stroke-width="1"/>
<rect x="623" y="29" width="3" height="8" fill="#ff0000"/>
<line x1="630.5" y1="25" x2="630.5" y2="34" stroke="#ff0000" stroke-width="1"/>
<rect x="629" y="26" width="3" height="4" fill="#ff0000"/>
<line x1="636.5" y1="29" x2="636.5" y2="34" stroke="#0000ff" stroke-width="1"/>
<rect x="635" y="33" width="3" height="1" fill="#0000ff"/>
<line x1="642.5" y1="29" x2="642.5" y2="34" stroke="#0000ff" stroke-width="1"/>
<rect x="641" y="33" width="3" height="1" fill="#0000ff"/>
<line x1="648.5" y1="29" x2="648.5" y2="34" stroke="#0000ff" stroke-width="1"/>
<rect x="647" y="33" width="3" height="1" fill="#0000ff"/>
<line x1="654.5" y1="25" x2="654.5" y2="35" stroke="#ff0000" stroke-width="1"/>
<rect x="653" y="25" width="3" height="5" fill="#ff0000"/>
<line x1="660.5" y1="21" x2="660.5" y2="32" stroke="#ff0000" stroke-width="1"/>
<rect x="659" y="25" width="3" height="5" fill="#ff0000"/>
<line x1="666.5" y1="21" x2="666.5" y2="27" stroke="#0000ff" stroke-width="1"/>
<rect x="665" y="25" width="3" height="1" fill="#0000ff"/>
<line x1="672.5" y1="17" x2="672.5" y2="27" stroke="#ff0000" stroke-width="1"/>
<rect x="671" y="21" width="3" height="1" fill="#ff0000"/>
<line x1="678.5" y1="21" x2="678.5" y2="27" stroke="#0000ff" stroke-width="1"/>
<rect x="677" y="25" width="3" height="1" fill="#0000ff"/>
<line x1="684.5" y1="21" x2="684.5" y2="27" stroke="#ff0000" stroke-width="1"/>
<rect x="683" y="22" width="3" height="4" fill="#ff0000"/>
<line x1="690.5" y1="17" x2="690.5" y2="26" stroke="#ff0000" stroke-width="1"/>
<rect x="689" y="17" width="3" height="8" fill="#ff0000"/>
<line x1="696.5" y1="17" x2="696.5" y2="27" stroke="#0000ff" stroke-width="1"/>
<rect x="695" y="22" width="3" height="1" fill="#0000ff"/>
<line x1="702.5" y1="17" x2="702.5" y2="27" stroke="#0000ff" stroke-width="1"/>
<rect x="701" y="22" width="3" height="1" fill="#0000ff"/>
<line x1="708.5" y1="21" x2="708.5" y2="31" stroke="#0000ff" stroke-width="1"/>
<rect x="707" y="21" width="3" height="1" fill="#0000ff"/>
<line x1="714.5" y1="21" x2="714.5" y2="34" stroke="#0000ff" stroke-width="1"/>
<rect x="713" y="21" width="3" height="9" fill="#0000ff"/>
<line x1="720.5" y1="22" x2="720.5" y2="31" stroke="#ff0000" stroke-width="1"/>
<rect x="719" y="22" width="3" height="7" fill="#ff0000"/>
<line x1="726.5" y1="25" x2="726.5" y2="39" stroke="#0000ff" stroke-width="1"/>
<rect x="725" y="25" width="3" height="12" fill="#0000ff"/>
<line x1="732.5" y1="33" x2="732.5" y2="42" stroke="#0000ff" stroke-width="1"/>
<rect x="731" y="37" width="3" height="1" fill="#0000ff"/>
<line x1="738.5" y1="33" x2="738.5" y2="39" stroke="#0000ff" stroke-width="1"/>
<rect x="737" y="38" width="3" height="1" fill="#0000ff"/>
<line x1="744.5" y1="37" x2="744.5" y2="51" stroke="#0000ff" stroke-width="1"/>
<rect x="743" y="41" width="3" height="9" fill="#0000ff"/>
<line x1="750.5" y1="41" x2="750.5" y2="48" stroke="#ff0000" stroke-width="1"/>
<rect x="749" y="45" width="3" height="1" fill="#ff0000"/>
<line x1="756.5" y1="42" x2="756.5" y2="47" stroke="#ff0000" stroke-width="1"/>
<rect x="755" y="42" width="3" height="1" fill="#ff0000"/>
<line x1="762.5" y1="37" x2="762.5" y2="42" stroke="#0000ff" stroke-width="1"/>
<rect x="761" y="41" width="3" height="1" fill="#0000ff"/>
<line x1="768.5" y1="29" x2="768.5" y2="42" stroke="#ff0000" stroke-width="1"/>
<rect x="767" y="29" width="3" height="12" fill="#ff0000"/>
<line x1="774.5" y1="29" x2="774.5" y2="35" stroke="#ff0000" stroke-width="1"/>
<rect x="773" y="29" width="3" height="4" fill="#ff0000"/>
<line x1="780.5" y1="25" x2="780.5" y2="35" stroke="#ff0000" stroke-width="1"/>
<rect x="779" y="25" width="3" height="8" fill="#ff0000"/>
<line x1="786.5" y1="25" x2="786.5" y2="31" stroke="#0000ff" stroke-width="1"/>
<rect x="785" y="25" width="3" height="5" fill="#0000ff"/>
<line x1="792.5" y1="25" x2="792.5" y2="35" stroke="#0000ff" stroke-width="1"/>
<rect x="791" y="25" width="3" height="8" fill="#0000ff"/>
<line x1="798.5" y1="29" x2="798.5" y2="38" stroke="#0000ff" stroke-width="1"/>
<rect x="797" y="33" width="3" height="4" fill="#0000ff"/>
<line x1="804.5" y1="29" x2="804.5" y2="38" stroke="#0000ff" stroke-width="1"/>
<rect x="803" y="33" width="3" height="1" fill="#0000ff"/>
<line x1="810.5" y1="25" x2="810.5" y2="35" stroke="#0000ff" stroke-width="1"/>
<rect x="809" y="25" width="3" height="8" fill="#0000ff"/>
<line x1="816.5" y1="25" x2="816.5" y2="35" stroke="#ff0000" stroke-width="1"/>
<rect x="815" y="25" width="3" height="5" fill="#ff0000"/>
<line x1="822.5" y1="25" x2="822.5" y2="39" stroke="#0000ff" stroke-width="1"/>
<rect x="821" y="25" width="3" height="8" fill="#0000ff"/>
<line x1="828.5" y1="29" x2="828.5" y2="39" stroke="#0000ff" stroke-width="1"/>
<rect x="827" y="33" width="3" height="1" fill="#0000ff"/>
<line x1="834.5" y1="32" x2="834.5" y2="42" stroke="#0000ff" stroke-width="1"/>
<rect x="833" y="32" width="3" height="9" fill="#0000ff"/>
<line x1="840.5" y1="33" x2="840.5" y2="43" stroke="#ff0000" stroke-width="1"/>
<rect x="839" y="37" width="3" height="4" fill="#ff0000"/>
<line x1="846.5" y1="37" x2="846.5" y2="43" stroke="#0000ff" stroke-width="1"/>
<rect x="845" y="37" width="3" height="4" fill="#0000ff"/>
<line x1="852.5" y1="33" x2="852.5" y2="43" stroke="#ff0000" stroke-width="1"/>
<rect x="851" y="37" width="3" height="4" fill="#ff0000"/>
<line x1="858.5" y1="33" x2="858.5" y2="43" stroke="#ff0000" stroke-width="1"/>
<rect x="857" y="37" width="3" height="4" fill="#ff0000"/>
<line x1="864.5" y1="29" x2="864.5" y2="39" stroke="#ff0000" stroke-width="1"/>
<rect x="863" y="33" width="3" height="4" fill="#ff0000"/>
<line x1="870.5" y1="29" x2="870.5" y2="39" stroke="#0000ff" stroke-width="1"/>
<rect x="869" y="33" width="3" height="4" fill="#0000ff"/>
<line x1="876.5" y1="29" x2="876.5" y2="39" stroke="#0000ff" stroke-width="1"/>
<rect x="875" y="33" width="3" height="4" fill="#0000ff"/>
<line x1="882.5" y1="29" x2="882.5" y2="39" stroke="#ff0000" stroke-width="1"/>
<rect x="881" y="33" width="3" height="4" fill="#ff0000"/>
<line x1="888.5" y1="29" x2="888.5" y2="39" stroke="#0000ff" stroke-width="1"/>
<rect x="887" y="33" width="3" height="4" fill="#0000ff"/>
<line x1="894.5" y1="29" x2="894.5" y2="39" stroke="#ff0000" stroke-width="1"/>
<rect x="893" y="34" width="3" height="3" fill="#ff0000"/>
<line x1="900.5" y1="29" x2="900.5" y2="39" stroke="#0000ff" stroke-width="1"/>
<rect x="899" y="33" width="3" height="1" fill="#0000ff"/>
<line x1="906.5" y1="29" x2="906.5" y2="39" stroke="#0000ff" stroke-width="1"/>
<rect x="905" y="33" width="3" height="4" fill="#0000ff"/>
<line x1="912.5" y1="29" x2="912.5" y2="39" stroke="#ff0000" stroke-width="1"/>
<rect x="911" y="34" width="3" height="3" fill="#ff0000"/>
<line x1="918.5" y1="29" x2="918.5" y2="39" stroke="#0000ff" stroke-width="1"/>
<rect x="917" y="34" width="3" height="3" fill="#0000ff"/>
<line x1="924.5" y1="33" x2="924.5" y2="39" stroke="#0000ff" stroke-width="1"/>
<rect x="923" y="37" width="3" height="1" fill="#0000ff"/>
<line x1="930.5" y1="29" x2="930.5" y2="39" stroke="#ff0000" stroke-width="1"/>
<rect x="929" y="29" width="3" height="8" fill="#ff0000"/>
<line x1="936.5" y1="29" x2="936.5" y2="38" stroke="#0000ff" stroke-width="1"/>
<rect x="935" y="29" width="3" height="4" fill="#0000ff"/>
<line x1="942.5" y1="29" x2="942.5" y2="39" stroke="#0000ff" stroke-width="1"/>
<rect x="941" y="29" width="3" height="4" fill="#0000ff"/>
<line x1="948.5" y1="33" x2="948.5" y2="39" stroke="#0000ff" stroke-width="1"/>
<rect x="947" y="33" width="3" height="4" fill="#0000ff"/>
<line x1="954.5" y1="29" x2="954.5" y2="39" stroke="#ff0000" stroke-width="1"/>
<rect x="953" y="33" width="3" height="4" fill="#ff0000"/>
<line x1="960.5" y1="29" x2="960.5" y2="35" stroke="#ff0000" stroke-width="1"/>
<rect x="959" y="29" width="3" height="5" fill="#ff0000"/>
<line x1="966.5" y1="29" x2="966.5" y2="39" stroke="#0000ff" stroke-width="1"/>
<rect x="965" y="30" width="3" height="3" fill="#0000ff"/>
<line x1="972.5" y1="29" x2="972.5" y2="35" stroke="#0000ff" stroke-width="1"/>
<rect x="971" y="30" width="3" height="3" fill="#0000ff"/>
<line x1="978.5" y1="29" x2="978.5" y2="35" stroke="#ff0000" stroke-width="1"/>
<rect x="977" y="29" width="3" height="4" fill="#ff0000"/>
<line x1="984.5" y1="29" x2="984.5" y2="39" stroke="#0000ff" stroke-width="1"/>
<rect x="983" y="29" width="3" height="8" fill="#0000ff"/>
<line x1="990.5" y1="33" x2="990.5" y2="39" stroke="#ff0000" stroke-width="1"/>
<rect x="989" y="33" width="3" height="4" fill="#ff0000"/>
<line x1="996.5" y1="33" x2="996.5" y2="39" stroke="#0000ff" stroke-width="1"/>
<rect x="995" y="33" width="3" height="1" fill="#0000ff"/>
<line x1="1002.5" y1="29" x2="1002.5" y2="39" stroke="#ff0000" stroke-width="1"/>
<rect x="1001" y="33" width="3" height="1" fill="#ff0000"/>
<line x1="1008.5" y1="25" x2="1008.5" y2="35" stroke="#ff0000" stroke-width="1"/>
<rect x="1007" y="29" width="3" height="4" fill="#ff0000"/>
<line x1="1014.5" y1="29" x2="1014.5" y2="39" stroke="#ff0000" stroke-width="1"/>
<rect x="1013" y="32" width="3" height="1" fill="#ff0000"/>
<line x1="1020.5" y1="29" x2="1020.5" y2="39" stroke="#0000ff" stroke-width="1"/>
<rect x="1019" y="32" width="3" height="1" fill="#0000ff"/>
<line x1="1026.5" y1="25" x2="1026.5" y2="35" stroke="#ff0000" stroke-width="1"/>
<rect x="1025" y="29" width="3" height="4" fill="#ff0000"/>
<line x1="1032.5" y1="25" x2="1032.5" y2="31" stroke="#0000ff" stroke-width="1"/>
<rect x="1031" y="29" width="3" height="1" fill="#0000ff"/>
<line x1="1038.5" y1="21" x2="1038.5" y2="30" stroke="#ff0000" stroke-width="1"/>
<rect x="1037" y="21" width="3" height="8" fill="#ff0000"/>
<line x1="1044.5" y1="21" x2="1044.5" y2="27" stroke="#0000ff" stroke-width="1"/>
<rect x="1043" y="21" width="3" height="5" fill="#0000ff"/>
<line x1="1050.5" y1="21" x2="1050.5" y2="31" stroke="#0000ff" stroke-width="1"/>
<rect x="1049" y="25" width="3" height="1" fill="#0000ff"/>
<line x1="1056.5" y1="25" x2="1056.5" y2="30" stroke="#0000ff" stroke-width="1"/>
<rect x="1055" y="25" width="3" height="4" fill="#0000ff"/>
<line x1="1062.5" y1="25" x2="1062.5" y2="30" stroke="#ff0000" stroke-width="1"/>
<rect x="1061" y="26" width="3" height="3" fill="#ff0000"/>
<line x1="1068.5" y1="25" x2="1068.5" y2="31" stroke="#0000ff" stroke-width="1"/>
<rect x="1067" y="26" width="3" height="3" fill="#0000ff"/>
</g>
<rect x="29" y="317" width="3" height="2" fill="#008c00"/>
<rect x="35" y="253" width="3" height="66" fill="#008c00"/>
<rect x="41" y="284" width="3" height="35" fill="#008c00"/>
<rect x="47" y="298" width="3" height="21" fill="#008c00"/>
<rect x="53" y="308" width="3" height="11" fill="#008c00"/>
<rect x="59" y="303" width="3" height="16" fill="#008c00"/>
<rect x="65" y="312" width="3" height="7" fill="#008c00"/>
<rect x="71" y="303" width="3" height="16" fill="#008c00"/>
<rect x="77" y="278" width="3" height="41" fill="#008c00"/>
<rect x="83" y="317" width="3" height="2" fill="#008c00"/>
<rect x="89" y="310" width="3" height="9" fill="#008c00"/>
<rect x="95" y="315" width="3" height="4" fill="#008c00"/>
<rect x="101" y="291" width="3" height="28" fill="#008c00"/>
<rect x="107" y="298" width="3" height="21" fill="#008c00"/>
<rect x="113" y="307" width="3" height="12" fill="#008c00"/>
<rect x="119" y="307" width="3" height="12" fill="#008c00"/>
<rect x="125" y="307" width="3" height="12" fill="#008c00"/>
<rect x="131" y="313" width="3" height="6" fill="#008c00"/>
<rect x="137" y="308" width="3" height="11" fill="#008c00"/>
<rect x="143" y="313" width="3" height="6" fill="#008c00"/>
<rect x="149" y="318" width="3" height="1" fill="#008c00"/>
<rect x="155" y="313" width="3" height="6" fill="#008c00"/>
<rect x="161" y="306" width="3" height="13" fill="#008c00"/>
<rect x="167" y="295" width="3" height="24" fill="#008c00"/>
<rect x="173" y="313" width="3" height="6" fill="#008c00"/>
<rect x="179" y="316" width="3" height="3" fill="#008c00"/>
<rect x="185" y="318" width="3" height="1" fill="#008c00"/>
<rect x="191" y="314" width="3" height="5" fill="#008c00"/>
<rect x="203" y="318" width="3" height="1" fill="#008c00"/>
<rect x="209" y="314" width="3" height="5" fill="#008c00"/>
<rect x="215" y="313" width="3" height="6" fill="#008c00"/>
<rect x="227" y="316" width="3" height="3" fill="#008c00"/>
<rect x="233" y="317" width="3" height="2" fill="#008c00"/>
<rect x="251" y="317" width="3" height="2" fill="#008c00"/>
<rect x="257" y="304" width="3" height="15" fill="#008c00"/>
<rect x="263" y="311" width="3" height="8" fill="#008c00"/>
<rect x="269" y="313" width="3" height="6" fill="#008c00"/>
<rect x="275" y="316" width="3" height="3" fill="#008c00"/>
<rect x="281" y="317" width="3" height="2" fill="#008c00"/>
<rect x="287" y="307" width="3" height="12" fill="#008c00"/>
<rect x="293" y="306" width="3" height="13" fill="#008c00"/>
<rect x="299" y="303" width="3" height="16" fill="#008c00"/>
<rect x="305" y="294" width="3" height="25" fill="#008c00"/>
<rect x="311" y="282" width="3" height="37" fill="#008c00"/>
<rect x="317" y="313" width="3" height="6" fill="#008c00"/>
<rect x="323" y="316" width="3" height="3" fill="#008c00"/>
<rect x="329" y="318" width="3" height="1" fill="#008c00"/>
<rect x="335" y="315" width="3" height="4" fill="#008c00"/>
<rect x="341" y="318" width="3" height="1" fill="#008c00"/>
<rect x="347" y="307" width="3" height="12" fill="#008c00"/>
<rect x="353" y="295" width="3" height="24" fill="#008c00"/>
<rect x="359" y="318" width="3" height="1" fill="#008c00"/>
<rect x="365" y="315" width="3" height="4" fill="#008c00"/>
<rect x="371" y="315" width="3" height="4" fill="#008c00"/>
<rect x="377" y="313" width="3" height="6" fill="#008c00"/>
<rect x="389" y="316" width="3" height="3" fill="#008c00"/>
<rect x="401" y="265" width="3" height="54" fill="#008c00"/>
<rect x="407" y="282" width="3" height="37" fill="#008c00"/>
<rect x="413" y="300" width="3" height="19" fill="#008c00"/>
<rect x="419" y="277" width="3" height="42" fill="#008c00"/>
<rect x="425" y="283" width="3" height="36" fill="#008c00"/>
<rect x="431" y="275" width="3" height="44" fill="#008c00"/>
<rect x="437" y="298" width="3" height="21" fill="#008c00"/>
<rect x="443" y="314" width="3" height="5" fill="#008c00"/>
<rect x="449" y="305" width="3" height="14" fill="#008c00"/>
<rect x="455" y="307" width="3" height="12" fill="#008c00"/>
<rect x="461" y="299" width="3" height="20" fill="#008c00"/>
<rect x="467" y="280" width="3" height="39" fill="#008c00"/>
<rect x="473" y="301" width="3" height="18" fill="#008c00"/>
<rect x="485" y="306" width="3" height="13" fill="#008c00"/>
<rect x="491" y="289" width="3" height="30" fill="#008c00"/>
<rect x="497" y="302" width="3" height="17" fill="#008c00"/>
<rect x="503" y="308" width="3" height="11" fill="#008c00"/>
<rect x="509" y="312" width="3" height="7" fill="#008c00"/>
<rect x="515" y="311" width="3" height="8" fill="#008c00"/>
<rect x="521" y="305" width="3" height="14" fill="#008c00"/>
<rect x="527" y="314" width="3" height="5" fill="#008c00"/>
<rect x="533" y="309" width="3" height="10" fill="#008c00"/>
<rect x="539" y="317" width="3" height="2" fill="#008c00"/>
<rect x="545" y="318" width="3" height="1" fill="#008c00"/>
<rect x="551" y="318" width="3" height="1" fill="#008c00"/>
<rect x="563" y="312" width="3" height="7" fill="#008c00"/>
<rect x="569" y="294" width="3" height="25" fill="#008c00"/>
<rect x="575" y="314" width="3" height="5" fill="#008c00"/>
<rect x="581" y="312" width="3" height="7" fill="#008c00"/>
<rect x="587" y="311" width="3" height="8" fill="#008c00"/>
<rect x="593" y="314" width="3" height="5" fill="#008c00"/>
<rect x="599" y="315" width="3" height="4" fill="#008c00"/>
<rect x="605" y="317" width="3" height="2" fill="#008c00"/>
<rect x="611" y="315" width="3" height="4" fill="#008c00"/>
<rect x="617" y="316" width="3" height="3" fill="#008c00"/>
<rect x="623" y="314" width="3" height="5" fill="#008c00"/>
<rect x="629" y="318" width="3" height="1" fill="#008c00"/>
<rect x="653" y="316" width="3" height="3" fill="#008c00"/>
<rect x="659" y="316" width="3" height="3" fill="#008c00"/>
<rect x="665" y="318" width="3" height="1" fill="#008c00"/>
<rect x="671" y="314" width="3" height="5" fill="#008c00"/>
<rect x="683" y="318" width="3" height="1" fill="#008c00"/>
<rect x="689" y="317" width="3" height="2" fill="#008c00"/>
<rect x="695" y="317" width="3" height="2" fill="#008c00"/>
<rect x="701" y="317" width="3" height="2" fill="#008c00"/>
<rect x="707" y="315" width="3" height="4" fill="#008c00"/>
<rect x="713" y="317" width="3" height="2" fill="#008c00"/>
<rect x="725" y="315" width="3" height="4" fill="#008c00"/>
<rect x="731" y="315" width="3" height="4" fill="#008c00"/>
<rect x="737" y="317" width="3" height="2" fill="#008c00"/>
<rect x="743" y="312" width="3" height="7" fill="#008c00"/>
<rect x="749" y="316" width="3" height="3" fill="#008c00"/>
<rect x="755" y="318" width="3" height="1" fill="#008c00"/>
<rect x="761" y="318" width="3" height="1" fill="#008c00"/>
<rect x="767" y="314" width="3" height="5" fill="#008c00"/>
<rect x="779" y="315" width="3" height="4" fill="#008c00"/>
<rect x="785" y="318" width="3" height="1" fill="#008c00"/>
<rect x="791" y="317" width="3" height="2" fill="#008c00"/>
<rect x="797" y="318" width="3" height="1" fill="#008c00"/>
<rect x="803" y="318" width="3" height="1" fill="#008c00"/>
<rect x="809" y="318" width="3" height="1" fill="#008c00"/>
<rect x="821" y="317" width="3" height="2" fill="#008c00"/>
<rect x="827" y="317" width="3" height="2" fill="#008c00"/>
<rect x="833" y="317" width="3" height="2" fill="#008c00"/>
<rect x="839" y="318" width="3" height="1" fill="#008c00"/>
<rect x="851" y="318" width="3" height="1" fill="#008c00"/>
<rect x="857" y="317" width="3" height="2" fill="#008c00"/>
<rect x="863" y="318" width="3" height="1" fill="#008c00"/>
<rect x="875" y="318" width="3" height="1" fill="#008c00"/>
<rect x="887" y="318" width="3" height="1" fill="#008c00"/>
<rect x="917" y="316" width="3" height="3" fill="#008c00"/>
<rect x="929" y="318" width="3" height="1" fill="#008c00"/>
<rect x="935" y="318" width="3" height="1" fill="#008c00"/>
<rect x="941" y="317" width="3" height="2" fill="#008c00"/>
<rect x="953" y="318" width="3" height="1" fill="#008c00"/>
<rect x="959" y="318" width="3" height="1" fill="#008c00"/>
<rect x="965" y="318" width="3" height="1" fill="#008c00"/>
<rect x="971" y="318" width="3" height="1" fill="#008c00"/>
<rect x="977" y="318" width="3" height="1" fill="#008c00"/>
<rect x="983" y="317" width="3" height="2" fill="#008c00"/>
<rect x="995" y="317" width="3" height="2" fill="#008c00"/>
<rect x="1001" y="318" width="3" height="1" fill="#008c00"/>
<rect x="1007" y="317" width="3" height="2" fill="#008c00"/>
<rect x="1013" y="317" width="3" height="2" fill="#008c00"/>
<rect x="1019" y="317" width="3" height="2" fill="#008c00"/>
<rect x="1025" y="317" width="3" height="2" fill="#008c00"/>
<rect x="1037" y="314" width="3" height="5" fill="#008c00"/>
<rect x="1043" y="317" width="3" height="2" fill="#008c00"/>
<rect x="1049" y="318" width="3" height="1" fill="#008c00"/>
<line x1="0" y1="410.5" x2="1069" y2="410.5" stroke="#808080" stroke-width="1"/>
<line x1="0.5" y1="410" x2="0.5" y2="412" stroke="#ff0000" stroke-width="1"/>
<rect x="6" y="410" width="1" height="1" fill="#ff0000"/>
<rect x="12" y="410" width="1" height="1" fill="#ff0000"/>
<rect x="18" y="410" width="1" height="1" fill="#ff0000"/>
<rect x="24" y="410" width="1" height="1" fill="#ff0000"/>
<rect x="30" y="410" width="1" height="1" fill="#ff0000"/>
<line x1="36.5" y1="404" x2="36.5" y2="411" stroke="#ff0000" stroke-width="1"/>
<line x1="42.5" y1="402" x2="42.5" y2="411" stroke="#ff0000" stroke-width="1"/>
<line x1="48.5" y1="401" x2="48.5" y2="411" stroke="#ff0000" stroke-width="1"/>
<line x1="54.5" y1="402" x2="54.5" y2="411" stroke="#ff0000" stroke-width="1"/>
<line x1="60.5" y1="403" x2="60.5" y2="411" stroke="#ff0000" stroke-width="1"/>
<line x1="66.5" y1="405" x2="66.5" y2="411" stroke="#ff0000" stroke-width="1"/>
<line x1="72.5" y1="408" x2="72.5" y2="411" stroke="#ff0000" stroke-width="1"/>
<line x1="78.5" y1="408" x2="78.5" y2="411" stroke="#ff0000" stroke-width="1"/>
<line x1="84.5" y1="408" x2="84.5" y2="411" stroke="#ff0000" stroke-width="1"/>
<line x1="90.5" y1="409" x2="90.5" y2="411" stroke="#ff0000" stroke-width="1"/>
<line x1="96.5" y1="408" x2="96.5" y2="411" stroke="#ff0000" stroke-width="1"/>
<line x1="102.5" y1="407" x2="102.5" y2="411" stroke="#ff0000" stroke-width="1"/>
<line x1="108.5" y1="405" x2="108.5" y2="411" stroke="#ff0000" stroke-width="1"/>
<line x1="114.5" y1="406" x2="114.5" y2="411" stroke="#ff0000" stroke-width="1"/>
<line x1="120.5" y1="407" x2="120.5" y2="411" stroke="#ff0000" stroke-width="1"/>
<line x1="126.5" y1="408" x2="126.5" y2="411" stroke="#ff0000" stroke-width="1"/>
<line x1="132.5" y1="409" x2="132.5" y2="411" stroke="#ff0000" stroke-width="1"/>
<rect x="138" y="410" width="1" height="1" fill="#ff0000"/>
<line x1="144.5" y1="410" x2="144.5" y2="412" stroke="#ff0000" stroke-width="1"/>
<line x1="150.5" y1="410" x2="150.5" y2="414" stroke="#ff0000" stroke-width="1"/>
<line x1="156.5" y1="410" x2="156.5" y2="415" stroke="#ff0000" stroke-width="1"/>
<line x1="162.5" y1="410" x2="162.5" y2="416" stroke="#ff0000" stroke-width="1"/>
<line x1="168.5" y1="410" x2="168.5" y2="417" stroke="#ff0000" stroke-width="1"/>
<line x1="174.5" y1="410" x2="174.5" y2="417" stroke="#ff0000" stroke-width="1"/>
<line x1="180.5" y1="410" x2="180.5" y2="416" stroke="#ff0000" stroke-width="1"/>
<line x1="186.5" y1="410" x2="186.5" y2="415" stroke="#ff0000" stroke-width="1"/>
<line x1="192.5" y1="410" x2="192.5" y2="416" stroke="#ff0000" stroke-width="1"/>
<line x1="198.5" y1="410" x2="198.5" y2="416" stroke="#ff0000" stroke-width="1"/>
<line x1="204.5" y1="410" x2="204.5" y2="416" stroke="#ff0000" stroke-width="1"/>
<line x1="210.5" y1="410" x2="210.5" y2="416" stroke="#ff0000" stroke-width="1"/>
<line x1="216.5" y1="410" x2="216.5" y2="414" stroke="#ff0000" stroke-width="1"/>
<line x1="222.5" y1="410" x2="222.5" y2="413" stroke="#ff0000" stroke-width="1"/>
<line x1="228.5" y1="410" x2="228.5" y2="413" stroke="#ff0000" stroke-width="1"/>
<line x1="234.5" y1="410" x2="234.5" y2="413" stroke="#ff0000" stroke-width="1"/>
<line x1="240.5" y1="410" x2="240.5" y2="413" stroke="#ff0000" stroke-width="1"/>
<line x1="246.5" y1="410" x2="246.5" y2="413" stroke="#ff0000" stroke-width="1"/>
<line x1="252.5" y1="410" x2="252.5" y2="413" stroke="#ff0000" stroke-width="1"/>
<line x1="258.5" y1="410" x2="258.5" y2="413" stroke="#ff0000" stroke-width="1"/>
<line x1="264.5" y1="410" x2="264.5" y2="413" stroke="#ff0000" stroke-width="1"/>
<line x1="270.5" y1="410" x2="270.5" y2="412" stroke="#ff0000" stroke-width="1"/>
<line x1="276.5" y1="410" x2="276.5" y2="412" stroke="#ff0000" stroke-width="1"/>
<line x1="282.5" y1="410" x2="282.5" y2="412" stroke="#ff0000" stroke-width="1"/>
<line x1="288.5" y1="410" x2="288.5" y2="412" stroke="#ff0000" stroke-width="1"/>
<rect x="294" y="410" width="1" height="1" fill="#ff0000"/>
<line x1="300.5" y1="408" x2="300.5" y2="411" stroke="#ff0000" stroke-width="1"/>
<line x1="306.5" y1="407" x2="306.5" y2="411" stroke="#ff0000" stroke-width="1"/>
<line x1="312.5" y1="406" x2="312.5" y2="411" stroke="#ff0000" stroke-width="1"/>
<line x1="318.5" y1="406" x2="318.5" y2="411" stroke="#ff0000" stroke-width="1"/>
<line x1="324.5" y1="405" x2="324.5" y2="411" stroke="#ff0000" stroke-width="1"/>
<line x1="330.5" y1="405" x2="330.5" y2="411" stroke="#ff0000" stroke-width="1"/>
<line x1="336.5" y1="405" x2="336.5" y2="411" stroke="#ff0000" stroke-width="1"/>
<line x1="342.5" y1="408" x2="342.5" y2="411" stroke="#ff0000" stroke-width="1"/>
<line x1="348.5" y1="407" x2="348.5" y2="411" stroke="#ff0000" stroke-width="1"/>
<line x1="354.5" y1="408" x2="354.5" y2="411" stroke="#ff0000" stroke-width="1"/>
<line x1="360.5" y1="408" x2="360.5" y2="411" stroke="#ff0000" stroke-width="1"/>
<line x1="366.5" y1="408" x2="366.5" y2="411" stroke="#ff0000" stroke-width="1"/>
<line x1="372.5" y1="409" x2="372.5" y2="411" stroke="#ff0000" stroke-width="1"/>
<rect x="378" y="410" width="1" height="1" fill="#ff0000"/>
<line x1="384.5" y1="410" x2="384.5" y2="412" stroke="#ff0000" stroke-width="1"/>
<rect x="390" y="410" width="1" height="1" fill="#ff0000"/>
<rect x="396" y="410" width="1" height="1" fill="#ff0000"/>
<line x1="402.5" y1="408" x2="402.5" y2="411" stroke="#ff0000" stroke-width="1"/>
<line x1="408.5" y1="406" x2="408.5" y2="411" stroke="#ff0000" stroke-width="1"/>
<line x1="414.5" y1="404" x2="414.5" y2="411" stroke="#ff0000" stroke-width="1"/>
<line x1="420.5" y1="405" x2="420.5" y2="411" stroke="#ff0000" stroke-width="1"/>
<line x1="426.5" y1="403" x2="426.5" y2="411" stroke="#ff0000" stroke-width="1"/>
<line x1="432.5" y1="402" x2="432.5" y2="411" stroke="#ff0000" stroke-width="1"/>
<line x1="438.5" y1="401" x2="438.5" y2="411" stroke="#ff0000" stroke-width="1"/>
<line x1="444.5" y1="403" x2="444.5" y2="411" stroke="#ff0000" stroke-width="1"/>
<line x1="450.5" y1="402" x2="450.5" y2="411" stroke="#ff0000" stroke-width="1"/>
<line x1="456.5" y1="403" x2="456.5" y2="411" stroke="#ff0000" stroke-width="1"/>
<line x1="462.5" y1="404" x2="462.5" y2="411" stroke="#ff0000" stroke-width="1"/>
<line x1="468.5" y1="404" x2="468.5" y2="411" stroke="#ff0000" stroke-width="1"/>
<line x1="474.5" y1="404" x2="474.5" y2="411" stroke="#ff0000" stroke-width="1"/>
<line x1="480.5" y1="405" x2="480.5" y2="411" stroke="#ff0000" stroke-width="1"/>
<line x1="486.5" y1="406" x2="486.5" y2="411" stroke="#ff0000" stroke-width="1"/>
<line x1="492.5" y1="403" x2="492.5" y2="411" stroke="#ff0000" stroke-width="1"/>
<line x1="498.5" y1="401" x2="498.5" y2="411" stroke="#ff0000" stroke-width="1"/>
<line x1="504.5" y1="400" x2="504.5" y2="411" stroke="#ff0000" stroke-width="1"/>
<line x1="510.5" y1="401" x2="510.5" y2="411" stroke="#ff0000" stroke-width="1"/>
<line x1="516.5" y1="402" x2="516.5" y2="411" stroke="#ff0000" stroke-width="1"/>
<line x1="522.5" y1="402" x2="522.5" y2="411" stroke="#ff0000" stroke-width="1"/>
<line x1="528.5" y1="401" x2="528.5" y2="411" stroke="#ff0000" stroke-width="1"/>
<line x1="534.5" y1="404" x2="534.5" y2="411" stroke="#ff0000" stroke-width="1"/>
<line x1="540.5" y1="405" x2="540.5" y2="411" stroke="#ff0000" stroke-width="1"/>
<line x1="546.5" y1="407" x2="546.5" y2="411" stroke="#ff0000" stroke-width="1"/>
<line x1="552.5" y1="408" x2="552.5" y2="411" stroke="#ff0000" stroke-width="1"/>
<line x1="558.5" y1="409" x2="558.5" y2="411" stroke="#ff0000" stroke-width="1"/>
<line x1="564.5" y1="410" x2="564.5" y2="412" stroke="#ff0000" stroke-width="1"/>
<rect x="570" y="410" width="1" height="1" fill="#ff0000"/>
<line x1="576.5" y1="408" x2="576.5" y2="411" stroke="#ff0000" stroke-width="1"/>
<rect x="582" y="410" width="1" height="1" fill="#ff0000"/>
<line x1="588.5" y1="410" x2="588.5" y2="412" stroke="#ff0000" stroke-width="1"/>
<line x1="594.5" y1="410" x2="594.5" y2="413" stroke="#ff0000" stroke-width="1"/>
<line x1="600.5" y1="410" x2="600.5" y2="415" stroke="#ff0000" stroke-width="1"/>
<line x1="606.5" y1="410" x2="606.5" y2="416" stroke="#ff0000" stroke-width="1"/>
<line x1="612.5" y1="410" x2="612.5" y2="418" stroke="#ff0000" stroke-width="1"/>
<line x1="618.5" y1="410" x2="618.5" y2="420" stroke="#ff0000" stroke-width="1"/>
<line x1="624.5" y1="410" x2="624.5" y2="420" stroke="#ff0000" stroke-width="1"/>
<line x1="630.5" y1="410" x2="630.5" y2="419" stroke="#ff0000" stroke-width="1"/>
<line x1="636.5" y1="410" x2="636.5" y2="419" stroke="#ff0000" stroke-width="1"/>
<line x1="642.5" y1="410" x2="642.5" y2="419" stroke="#ff0000" stroke-width="1"/>
<line x1="648.5" y1="410" x2="648.5" y2="418" stroke="#ff0000" stroke-width="1"/>
<line x1="654.5" y1="410" x2="654.5" y2="418" stroke="#ff0000" stroke-width="1"/>
<line x1="660.5" y1="410" x2="660.5" y2="417" stroke="#ff0000" stroke-width="1"/>
<line x1="666.5" y1="410" x2="666.5" y2="417" stroke="#ff0000" stroke-width="1"/>
<line x1="672.5" y1="410" x2="672.5" y2="417" stroke="#ff0000" stroke-width="1"/>
<line x1="678.5" y1="410" x2="678.5" y2="416" stroke="#ff0000" stroke-width="1"/>
<line x1="684.5" y1="410" x2="684.5" y2="415" stroke="#ff0000" stroke-width="1"/>
<line x1="690.5" y1="410" x2="690.5" y2="414" stroke="#ff0000" stroke-width="1"/>
<line x1="696.5" y1="410" x2="696.5" y2="414" stroke="#ff0000" stroke-width="1"/>
<line x1="702.5" y1="410" x2="702.5" y2="414" stroke="#ff0000" stroke-width="1"/>
<line x1="708.5" y1="410" x2="708.5" y2="414" stroke="#ff0000" stroke-width="1"/>
<line x1="714.5" y1="410" x2="714.5" y2="415" stroke="#ff0000" stroke-width="1"/>
<line x1="720.5" y1="410" x2="720.5" y2="416" stroke="#ff0000" stroke-width="1"/>
<line x1="726.5" y1="410" x2="726.5" y2="417" stroke="#ff0000" stroke-width="1"/>
<line x1="732.5" y1="410" x2="732.5" y2="418" stroke="#ff0000" stroke-width="1"/>
<line x1="738.5" y1="410" x2="738.5" y2="419" stroke="#ff0000" stroke-width="1"/>
<line x1="744.5" y1="410" x2="744.5" y2="420" stroke="#ff0000" stroke-width="1"/>
<line x1="750.5" y1="410" x2="750.5" y2="421" stroke="#ff0000" stroke-width="1"/>
<line x1="756.5" y1="410" x2="756.5" y2="420" stroke="#ff0000" stroke-width="1"/>
<line x1="762.5" y1="410" x2="762.5" y2="419" stroke="#ff0000" stroke-width="1"/>
<line x1="768.5" y1="410" x2="768.5" y2="416" stroke="#ff0000" stroke-width="1"/>
<line x1="774.5" y1="410" x2="774.5" y2="415" stroke="#ff0000" stroke-width="1"/>
<line x1="780.5" y1="410" x2="780.5" y2="412" stroke="#ff0000" stroke-width="1"/>
<line x1="786.5" y1="410" x2="786.5" y2="412" stroke="#ff0000" stroke-width="1"/>
<line x1="792.5" y1="410" x2="792.5" y2="412" stroke="#ff0000" stroke-width="1"/>
<line x1="798.5" y1="410" x2="798.5" y2="412" stroke="#ff0000" stroke-width="1"/>
<rect x="804" y="410" width="1" height="1" fill="#ff0000"/>
<line x1="810.5" y1="409" x2="810.5" y2="411" stroke="#ff0000" stroke-width="1"/>
<line x1="816.5" y1="409" x2="816.5" y2="411" stroke="#ff0000" stroke-width="1"/>
<rect x="822" y="410" width="1" height="1" fill="#ff0000"/>
<line x1="828.5" y1="410" x2="828.5" y2="412" stroke="#ff0000" stroke-width="1"/>
<line x1="834.5" y1="410" x2="834.5" y2="413" stroke="#ff0000" stroke-width="1"/>
<line x1="840.5" y1="410" x2="840.5" y2="413" stroke="#ff0000" stroke-width="1"/>
<line x1="846.5" y1="410" x2="846.5" y2="414" stroke="#ff0000" stroke-width="1"/>
<line x1="852.5" y1="410" x2="852.5" y2="414" stroke="#ff0000" stroke-width="1"/>
<line x1="858.5" y1="410" x2="858.5" y2="414" stroke="#ff0000" stroke-width="1"/>
<line x1="864.5" y1="410" x2="864.5" y2="413" stroke="#ff0000" stroke-width="1"/>
<line x1="870.5" y1="410" x2="870.5" y2="413" stroke="#ff0000" stroke-width="1"/>
<line x1="876.5" y1="410" x2="876.5" y2="412" stroke="#ff0000" stroke-width="1"/>
<line x1="882.5" y1="410" x2="882.5" y2="412" stroke="#ff0000" stroke-width="1"/>
<line x1="888.5" y1="410" x2="888.5" y2="412" stroke="#ff0000" stroke-width="1"/>
<rect x="894" y="410" width="1" height="1" fill="#ff0000"/>
<rect x="900" y="410" width="1" height="1" fill="#ff0000"/>
<rect x="906" y="410" width="1" height="1" fill="#ff0000"/>
<rect x="912" y="410" width="1" height="1" fill="#ff0000"/>
<rect x="918" y="410" width="1" height="1" fill="#ff0000"/>
<rect x="924" y="410" width="1" height="1" fill="#ff0000"/>
<line x1="930.5" y1="409" x2="930.5" y2="411" stroke="#ff0000" stroke-width="1"/>
<line x1="936.5" y1="409" x2="936.5" y2="411" stroke="#ff0000" stroke-width="1"/>
<line x1="942.5" y1="409" x2="942.5" y2="411" stroke="#ff0000" stroke-width="1"/>
<line x1="948.5" y1="409" x2="948.5" y2="411" stroke="#ff0000" stroke-width="1"/>
<line x1="954.5" y1="409" x2="954.5" y2="411" stroke="#ff0000" stroke-width="1"/>
<line x1="960.5" y1="409" x2="960.5" y2="411" stroke="#ff0000" stroke-width="1"/>
<line x1="966.5" y1="409" x2="966.5" y2="411" stroke="#ff0000" stroke-width="1"/>
<line x1="972.5" y1="409" x2="972.5" y2="411" stroke="#ff0000" stroke-width="1"/>
<line x1="978.5" y1="409" x2="978.5" y2="411" stroke="#ff0000" stroke-width="1"/>
<line x1="984.5" y1="409" x2="984.5" y2="411" stroke="#ff0000" stroke-width="1"/>
<line x1="990.5" y1="409" x2="990.5" y2="411" stroke="#ff0000" stroke-width="1"/>
<line x1="996.5" y1="409" x2="996.5" y2="411" stroke="#ff0000" stroke-width="1"/>
<line x1="1002.5" y1="409" x2="1002.5" y2="411" stroke="#ff0000" stroke-width="1"/>
<line x1="1008.5" y1="409" x2="1008.5" y2="411" stroke="#ff0000" stroke-width="1"/>
<line x1="1014.5" y1="409" x2="1014.5" y2="411" stroke="#ff0000" stroke-width="1"/>
<line x1="1020.5" y1="409" x2="1020.5" y2="411" stroke="#ff0000" stroke-width="1"/>
<line x1="1026.5" y1="409" x2="1026.5" y2="411" stroke="#ff0000" stroke-width="1"/>
<line x1="1032.5" y1="409" x2="1032.5" y2="411" stroke="#ff0000" stroke-width="1"/>
<line x1="1038.5" y1="408" x2="1038.5" y2="411" stroke="#ff0000" stroke-width="1"/>
<line x1="1044.5" y1="408" x2="1044.5" y2="411" stroke="#ff0000" stroke-width="1"/>
<line x1="1050.5" y1="409" x2="1050.5" y2="411" stroke="#ff0000" stroke-width="1"/>
<line x1="1056.5" y1="409" x2="1056.5" y2="411" stroke="#ff0000" stroke-width="1"/>
<line x1="1062.5" y1="409" x2="1062.5" y2="411" stroke="#ff0000" stroke-width="1"/>
<line x1="1068.5" y1="409" x2="1068.5" y2="411" stroke="#ff0000" stroke-width="1"/>
<polyline points="0.5,410.5 31.5,410.5 35.5,404.9 42.2,399.9 48.9,396.2 58.9,394.1 63.9,394.4 72.3,396.1 92.3,396.1 100.5,393.2 109,389.5 124,389.1 134,390.2 150.5,394.1 160.5,398.2 169.1,401.9 184.1,403.3 200.5,407.4 210.5,408.5 222.5,407.9 232.5,408.5 244.2,409.5 255.9,410.8 265.9,411.5 272.5,410.8 285.9,410.8 289.3,411.9 295.9,410.8 306,405.8 316,403.3 326,400.2 336,398.7 342.5,399.9 349.4,398.7 362.5,398.2 372.5,398.7 382.5,400.7 396.1,400.7 406.1,395.7 416.1,390.7 421.1,390.7 429.5,385.2 437.8,381.1 444.5,380.7 451.2,377.9 459.5,377 472.9,372.9 486.2,372.9 499.5,361.5 506.3,359 517.9,357.7 529.5,352.5 534.5,354 543,354 553,355.7 564.5,359 576.4,356 583,356.8 594.7,361.5 611.5,369 619.8,375.7 628.1,377.4 643.1,382.4 659.8,385.7 666.5,386.9 676.5,387.7 693.2,388.2 706.5,390.2 721.5,395.2 739.9,404.1 750,409.5 756.5,410.8 763.3,411.5 773.3,409.9 780,408.3 795,407.9 805.5,407.1 813.4,405.8 820,405.8 826.5,407.9 833.5,409.5 843.5,410.8 850.1,412.5 885.2,412.8 894.5,411.9 926.5,411.5 928.5,410.1 961.5,410.1 965.5,409.3 1033.5,409.3 1035.5,407.9 1038.5,406.9 1069.5,406.9" fill="none" stroke="#ffff00" stroke-width="1" />
<polyline points="0.5,409.9 3.5,410.5 33.9,410.5 40.5,409.1 50.5,404.1 60.5,400.7 70.5,398.7 92.3,397.4 109,394.5 124,391.5 154.1,391.5 167.5,394.9 184.1,399.1 200.5,402.4 217.5,404.9 222.5,405.8 232.5,406.3 244.2,407.9 255.9,409.1 269.2,409.9 285.9,410.3 289.3,410.8 295.9,410.8 306,409.1 316,407.4 326,405.3 339.3,402.9 352.5,400.7 366,399.9 382.5,399.9 389.5,400.7 397.8,400.7 406.1,399.1 416.1,397.4 429.5,393.2 439.5,389.5 444.5,387.9 461.2,382.4 477.9,377.9 487.9,376.5 502.9,369.9 519.5,364.9 536.3,359.5 544.5,357.9 578,357.9 583,356.8 594.7,359 611.5,362.4 621.5,367 644.8,374.9 659.8,379.9 666.5,380.7 683.2,383.5 699.9,386.5 721.5,389.9 739.9,395.7 756.5,401.5 768.3,405.8 778.3,405.8 780,406.9 831.5,406.9 833.5,407.9 843.5,408.3 850.1,409.5 861.8,409.9 865.1,410.8 873.5,411.1 876.5,411.5 926.9,411.5 928.5,410.8 961.9,410.8 965.3,409.9 1033.5,409.9 1037.1,409.1 1045.5,409.1 1048.5,407.9 1069.5,407.9" fill="none" stroke="#0000ff" stroke-width="1" />
<line x1="0" y1="467.5" x2="1069" y2="467.5" stroke="#0000ff" stroke-width="1"/>
<line x1="0" y1="512.5" x2="1069" y2="512.5" stroke="#ff0000" stroke-width="1"/>
<polyline points="0.5,506.5 6.5,500.9 12.5,496.567 18.5,487.033 24.5,482.467 30.5,474.1 36.5,471.7 42.5,466.833 48.5,466.267 54.5,467.933 60.5,470.433 66.5,475.6 72.5,481.167 78.5,484.367 84.5,485.133 90.5,482.9 96.5,480.233 102.5,473.633 108.5,467.967 114.5,463.967 120.5,465.467 126.5,469.2 132.5,472.367 138.5,475.133 144.5,476.333 150.5,477.833 156.5,481.167 162.5,487.467 168.5,497.667 174.5,503.8 180.5,504.633 186.5,502.1 192.5,501.833 198.5,504.167 204.5,504.3 210.5,503.433 216.5,497.867 222.5,490.067 228.5,483.133 234.5,482.767 240.5,483.233 246.5,481.567 252.5,476.367 258.5,479.967 264.5,484.967 270.5,487.533 276.5,482.7 282.5,479.933 288.5,481.7 294.5,482.1 300.5,477.933 306.5,469.5 312.5,465.2 318.5,464.2 324.5,465.133 330.5,464.6 336.5,462.967 342.5,463.533 348.5,462.233 354.5,462.533 360.5,462.133 366.5,463.533 372.5,464.633 378.5,468.933 384.5,477 390.5,484.633 396.5,485.467 402.5,481.567 408.5,474.6 414.5,467.933 420.5,465.167 426.5,463.5 432.5,465.167 438.5,464.433 444.5,467.033 450.5,466.633 456.5,466.4 462.5,463.133 468.5,461.4 474.5,458.467 480.5,456.633 486.5,455.967 492.5,455.667 498.5,455.367 504.5,455.633 510.5,458.333 516.5,460.567 522.5,460.4 528.5,457.6 534.5,456.2 540.5,456.933 546.5,458.067 552.5,458.267 558.5,458.567 564.5,458 570.5,457.633 576.5,455.933 582.5,456.033 588.5,458.433 594.5,463.733 600.5,469.3 606.5,476.267 612.5,484.6 618.5,495.467 624.5,499.333 630.5,497.4 636.5,493.1 642.5,492.3 648.5,495.233 654.5,493.667 660.5,490.033 666.5,482.3 672.5,476.2 678.5,472.867 684.5,471.267 690.5,468.367 696.5,464.933 702.5,462.6 708.5,464.667 714.5,473.4 720.5,481.867 726.5,495.5 732.5,502.9 738.5,511.233 744.5,515.4 750.5,518.133 756.5,518.133 762.5,514.967 768.5,508.7 774.5,500.9 780.5,490.7 786.5,483.1 792.5,478.267 798.5,474.933 804.5,471.6 810.5,468.367 816.5,464.467 822.5,464.567 828.5,466.533 834.5,477.367 840.5,488.2 846.5,502.233 852.5,509.1 858.5,512.467 864.5,510.933 870.5,510.067 876.5,509.4 882.5,506.067 888.5,501.233 894.5,495.933 900.5,493.133 906.5,493.633 912.5,487.633 918.5,484.767 924.5,475.067 930.5,470.067 936.5,461 942.5,461 948.5,469.333 954.5,477.933 960.5,477.767 966.5,473.3 972.5,471.1 978.5,470.033 984.5,473.833 990.5,475.933 996.5,481.033 1002.5,475.467 1008.5,472.233 1014.5,470.567 1020.5,478.2 1026.5,481.833 1032.5,484.067 1038.5,476.533 1044.5,471.967 1050.5,467.967 1056.5,472.433 1062.5,474.767 1068.5,479.333" fill="none" stroke="#ff0000" stroke-width="1" />
<polyline points="0.5,501.5 6.5,495.7 12.5,492.5 18.5,472.9 24.5,482 30.5,467.4 36.5,465.7 42.5,467.4 48.5,465.7 54.5,470.7 60.5,474.9 66.5,481.2 72.5,487.4 78.5,484.5 84.5,483.5 90.5,480.7 96.5,476.5 102.5,463.7 108.5,463.7 114.5,464.5 120.5,468.2 126.5,474.9 132.5,474 138.5,476.5 144.5,478.5 150.5,478.5 156.5,486.5 162.5,497.4 168.5,509.1 174.5,504.9 180.5,499.9 186.5,501.5 192.5,504.1 198.5,506.9 204.5,501.9 210.5,501.5 216.5,490.2 222.5,478.5 228.5,480.7 234.5,489.1 240.5,479.9 246.5,475.7 252.5,473.5 258.5,490.7 264.5,490.7 270.5,481.2 276.5,476.2 282.5,482.4 288.5,486.5 294.5,477.4 300.5,469.9 306.5,461.2 312.5,464.5 318.5,466.9 324.5,464 330.5,462.9 336.5,462 342.5,465.7 348.5,459 354.5,462.9 360.5,464.5 366.5,463.2 372.5,466.2 378.5,477.4 384.5,487.4 390.5,489.1 396.5,479.9 402.5,475.7 408.5,468.2 414.5,459.9 420.5,467.4 426.5,463.2 432.5,464.9 438.5,465.2 444.5,471 450.5,463.7 456.5,464.5 462.5,461.2 468.5,458.5 474.5,455.7 480.5,455.7 486.5,456.5 492.5,454.8 498.5,454.8 504.5,457.3 510.5,462.9 516.5,461.5 522.5,456.8 528.5,454.5 534.5,457.3 540.5,459 546.5,457.9 552.5,457.9 558.5,459.9 564.5,456.2 570.5,456.8 576.5,454.8 582.5,456.5 588.5,464 594.5,470.7 600.5,473.2 606.5,484.9 612.5,495.7 618.5,505.8 624.5,496.5 630.5,489.9 636.5,492.9 642.5,494.1 648.5,498.7 654.5,488.2 660.5,483.2 666.5,475.5 672.5,469.9 678.5,473.2 684.5,470.7 690.5,461.2 696.5,462.9 702.5,463.7 708.5,467.4 714.5,489.1 720.5,489.1 726.5,508.3 732.5,511.3 738.5,514.1 744.5,520.8 750.5,519.5 756.5,514.1 762.5,511.3 768.5,500.7 774.5,490.7 780.5,480.7 786.5,477.9 792.5,476.2 798.5,470.7 804.5,467.9 810.5,466.5 816.5,459 822.5,468.2 828.5,472.4 834.5,491.5 840.5,500.7 846.5,514.5 852.5,512.1 858.5,510.8 864.5,509.9 870.5,509.5 876.5,508.8 882.5,499.9 888.5,495 894.5,492.9 900.5,491.5 906.5,496.5 912.5,474.9 918.5,482.9 924.5,467.4 930.5,459.9 936.5,455.7 942.5,467.4 948.5,484.9 954.5,481.5 960.5,466.9 966.5,471.5 972.5,474.9 978.5,463.7 984.5,482.9 990.5,481.2 996.5,479 1002.5,466.2 1008.5,471.5 1014.5,474 1020.5,489.1 1026.5,482.4 1032.5,480.7 1038.5,466.5 1044.5,468.7 1050.5,468.7 1056.5,479.9 1062.5,475.7 1068.5,482.4" fill="none" stroke="#0000ff" stroke-width="1" />
</g>
<g style="filter:opacity(.999)">
<text y="11.5"><tspan x="3">日経</tspan><tspan class="d" x="27" textLength="18" lengthAdjust="spacingAndGlyphs">225</tspan><tspan x="45" textLength="24" lengthAdjust="spacingAndGlyphs">mini</tspan> <tspan class="d" x="75" textLength="12" lengthAdjust="spacingAndGlyphs">13</tspan><tspan class="p" x="88.26">/</tspan><tspan class="d" x="93" textLength="12" lengthAdjust="spacingAndGlyphs">03</tspan><tspan class="p" x="105.92">(</tspan> <tspan class="d" x="117" textLength="6" lengthAdjust="spacingAndGlyphs">5</tspan><tspan x="123">分</tspan><tspan class="p" x="136.26">,</tspan> <tspan class="d" x="147" textLength="24" lengthAdjust="spacingAndGlyphs">2012</tspan><tspan class="p" x="172.26">/</tspan><tspan class="d" x="177" textLength="12" lengthAdjust="spacingAndGlyphs">12</tspan><tspan class="p" x="190.26">/</tspan><tspan class="d" x="195" textLength="12" lengthAdjust="spacingAndGlyphs">22</tspan> <tspan class="p" x="213.92">-</tspan> <tspan class="d" x="225" textLength="24" lengthAdjust="spacingAndGlyphs">2012</tspan><tspan class="p" x="250.26">/</tspan><tspan class="d" x="255" textLength="12" lengthAdjust="spacingAndGlyphs">12</tspan><tspan class="p" x="268.26">/</tspan><tspan class="d" x="273" textLength="12" lengthAdjust="spacingAndGlyphs">27</tspan> <tspan class="p" x="291.92">)</tspan></text>
<text y="11.5"><tspan x="317">移動平均</tspan><tspan class="p" x="365.92">(</tspan> <tspan x="377" textLength="30" lengthAdjust="spacingAndGlyphs">Close</tspan><tspan class="p" x="408.26">,</tspan> <tspan class="d" x="419" textLength="12" lengthAdjust="spacingAndGlyphs">25</tspan> <tspan class="p" x="437.92">)</tspan></text>
<text y="11.5"><tspan x="463">一目均衡表</tspan><tspan class="p" x="523.92">(</tspan> <tspan class="d" x="535" textLength="6" lengthAdjust="spacingAndGlyphs">9</tspan><tspan class="p" x="542.26">,</tspan> <tspan class="d" x="553" textLength="12" lengthAdjust="spacingAndGlyphs">26</tspan><tspan class="p" x="566.26">,</tspan> <tspan class="d" x="577" textLength="12" lengthAdjust="spacingAndGlyphs">52</tspan> <tspan class="p" x="595.92">)</tspan></text>
<text y="11.5"><tspan x="621">移動平均</tspan><tspan class="p" x="669.92">(</tspan> <tspan x="681" textLength="30" lengthAdjust="spacingAndGlyphs">Close</tspan><tspan class="p" x="712.26">,</tspan> <tspan class="d" x="723" textLength="12" lengthAdjust="spacingAndGlyphs">75</tspan> <tspan class="p" x="741.92">)</tspan></text>
<text y="11.5"><tspan x="767">移動平均</tspan><tspan class="p" x="815.92">(</tspan> <tspan x="827" textLength="30" lengthAdjust="spacingAndGlyphs">Close</tspan><tspan class="p" x="858.26">,</tspan> <tspan class="d" x="869" textLength="12" lengthAdjust="spacingAndGlyphs">75</tspan> <tspan class="p" x="887.92">)</tspan></text>
<text y="11.5"><tspan x="913">移動平均</tspan><tspan class="p" x="961.92">(</tspan> <tspan x="973" textLength="30" lengthAdjust="spacingAndGlyphs">Close</tspan><tspan class="p" x="1004.26">,</tspan> <tspan class="d" x="1015" textLength="12" lengthAdjust="spacingAndGlyphs">10</tspan> <tspan class="p" x="1033.92">)</tspan></text>
<text y="25.5"><tspan x="3">移動平均</tspan><tspan class="p" x="51.92">(</tspan> <tspan x="63" textLength="30" lengthAdjust="spacingAndGlyphs">Close</tspan><tspan class="p" x="94.26">,</tspan> <tspan class="d" x="105" textLength="18" lengthAdjust="spacingAndGlyphs">150</tspan> <tspan class="p" x="129.92">)</tspan></text>
<text y="25.5"><tspan x="155">移動平均</tspan><tspan class="p" x="203.92">(</tspan> <tspan x="215" textLength="30" lengthAdjust="spacingAndGlyphs">Close</tspan><tspan class="p" x="246.26">,</tspan> <tspan class="d" x="257" textLength="12" lengthAdjust="spacingAndGlyphs">20</tspan> <tspan class="p" x="275.92">)</tspan></text>
<text y="25.5"><tspan x="301">移動平均</tspan><tspan class="p" x="349.92">(</tspan> <tspan x="361" textLength="30" lengthAdjust="spacingAndGlyphs">Close</tspan><tspan class="p" x="392.26">,</tspan> <tspan class="d" x="403" textLength="6" lengthAdjust="spacingAndGlyphs">5</tspan> <tspan class="p" x="415.92">)</tspan></text>
<text y="25.5"><tspan x="441">移動平均</tspan><tspan class="p" x="489.92">(</tspan> <tspan x="501" textLength="30" lengthAdjust="spacingAndGlyphs">Close</tspan><tspan class="p" x="532.26">,</tspan> <tspan class="d" x="543" textLength="12" lengthAdjust="spacingAndGlyphs">40</tspan> <tspan class="p" x="561.92">)</tspan></text>
<text y="246.5"><tspan x="3">出来高</tspan></text>
<text y="346.5"><tspan x="3" textLength="24" lengthAdjust="spacingAndGlyphs">MACD</tspan><tspan class="p" x="27.92">(</tspan> <tspan class="d" x="39" textLength="12" lengthAdjust="spacingAndGlyphs">12</tspan><tspan class="p" x="52.26">,</tspan> <tspan class="d" x="63" textLength="12" lengthAdjust="spacingAndGlyphs">26</tspan><tspan class="p" x="76.26">,</tspan> <tspan class="d" x="87" textLength="6" lengthAdjust="spacingAndGlyphs">9</tspan> <tspan class="p" x="99.92">)</tspan></text>
<text y="446.5"><tspan x="3">スロー・ストキャスティクス</tspan><tspan class="p" x="159.92">(</tspan> <tspan class="d" x="171" textLength="12" lengthAdjust="spacingAndGlyphs">14</tspan><tspan class="p" x="184.26">,</tspan> <tspan class="d" x="195" textLength="6" lengthAdjust="spacingAndGlyphs">3</tspan><tspan class="p" x="202.26">,</tspan> <tspan class="d" x="213" textLength="12" lengthAdjust="spacingAndGlyphs">80</tspan><tspan class="p" x="226.26">,</tspan> <tspan class="d" x="237" textLength="12" lengthAdjust="spacingAndGlyphs">20</tspan> <tspan class="p" x="255.92">)</tspan></text>
</g>
<g shape-rendering="crispEdges">
<line x1="0" y1="319.5" x2="1069" y2="319.5" stroke="#000" stroke-width="1"/>
<line x1="0" y1="534.5" x2="1131" y2="534.5" stroke="#000" stroke-width="1"/>
<line x1="1069.5" y1="0" x2="1069.5" y2="566" stroke="#000" stroke-width="1"/>
<line x1="1070" y1="17.5" x2="1075" y2="17.5" stroke="#000" stroke-width="1"/>
<line x1="1070" y1="57.5" x2="1075" y2="57.5" stroke="#000" stroke-width="1"/>
<line x1="1070" y1="97.5" x2="1075" y2="97.5" stroke="#000" stroke-width="1"/>
<line x1="1070" y1="134.5" x2="1075" y2="134.5" stroke="#000" stroke-width="1"/>
<line x1="1070" y1="174.5" x2="1075" y2="174.5" stroke="#000" stroke-width="1"/>
<line x1="1070" y1="211.5" x2="1075" y2="211.5" stroke="#000" stroke-width="1"/>
<line x1="1070" y1="252.5" x2="1075" y2="252.5" stroke="#000" stroke-width="1"/>
<line x1="1070" y1="289.5" x2="1075" y2="289.5" stroke="#000" stroke-width="1"/>
<line x1="1070" y1="351.5" x2="1075" y2="351.5" stroke="#000" stroke-width="1"/>
<line x1="1070" y1="388.5" x2="1075" y2="388.5" stroke="#000" stroke-width="1"/>
<line x1="1070" y1="452.5" x2="1075" y2="452.5" stroke="#000" stroke-width="1"/>
<line x1="1070" y1="489.5" x2="1075" y2="489.5" stroke="#000" stroke-width="1"/>
<line x1="12.5" y1="535" x2="12.5" y2="539" stroke="#000" stroke-width="1"/>
<line x1="60.5" y1="535" x2="60.5" y2="539" stroke="#000" stroke-width="1"/>
<line x1="156.5" y1="535" x2="156.5" y2="539" stroke="#000" stroke-width="1"/>
<line x1="252.5" y1="535" x2="252.5" y2="539" stroke="#000" stroke-width="1"/>
<line x1="348.5" y1="535" x2="348.5" y2="539" stroke="#000" stroke-width="1"/>
<line x1="444.5" y1="535" x2="444.5" y2="539" stroke="#000" stroke-width="1"/>
<line x1="552.5" y1="535" x2="552.5" y2="539" stroke="#000" stroke-width="1"/>
<line x1="648.5" y1="535" x2="648.5" y2="539" stroke="#000" stroke-width="1"/>
<line x1="744.5" y1="535" x2="744.5" y2="539" stroke="#000" stroke-width="1"/>
<line x1="840.5" y1="535" x2="840.5" y2="539" stroke="#000" stroke-width="1"/>
<line x1="936.5" y1="535" x2="936.5" y2="539" stroke="#000" stroke-width="1"/>
<line x1="1032.5" y1="535" x2="1032.5" y2="543" stroke="#000" stroke-width="1"/>
<rect x="1117" y="1" width="16" height="13" fill="#fff"/>
<line x1="1117" y1="1.5" x2="1133" y2="1.5" stroke="#c0c0c0" stroke-width="1"/>
<line x1="1117.5" y1="1" x2="1117.5" y2="14" stroke="#c0c0c0" stroke-width="1"/>
<line x1="1117" y1="13.5" x2="1133" y2="13.5" stroke="#808080" stroke-width="1"/>
<polygon points="1119.5,5.5 1129.5,5.5 1124.5,10.8" fill="#808080" stroke="#000" stroke-width="1" shape-rendering="auto"/>
<rect x="1117" y="236" width="16" height="13" fill="#fff"/>
<line x1="1117" y1="236.5" x2="1133" y2="236.5" stroke="#c0c0c0" stroke-width="1"/>
<line x1="1117.5" y1="236" x2="1117.5" y2="249" stroke="#c0c0c0" stroke-width="1"/>
<line x1="1117" y1="248.5" x2="1133" y2="248.5" stroke="#808080" stroke-width="1"/>
<polygon points="1119.5,240.5 1129.5,240.5 1124.5,245.8" fill="#808080" stroke="#000" stroke-width="1" shape-rendering="auto"/>
<rect x="1117" y="336" width="16" height="13" fill="#fff"/>
<line x1="1117" y1="336.5" x2="1133" y2="336.5" stroke="#c0c0c0" stroke-width="1"/>
<line x1="1117.5" y1="336" x2="1117.5" y2="349" stroke="#c0c0c0" stroke-width="1"/>
<line x1="1117" y1="348.5" x2="1133" y2="348.5" stroke="#808080" stroke-width="1"/>
<polygon points="1119.5,340.5 1129.5,340.5 1124.5,345.8" fill="#808080" stroke="#000" stroke-width="1" shape-rendering="auto"/>
<rect x="1117" y="436" width="16" height="13" fill="#fff"/>
<line x1="1117" y1="436.5" x2="1133" y2="436.5" stroke="#c0c0c0" stroke-width="1"/>
<line x1="1117.5" y1="436" x2="1117.5" y2="449" stroke="#c0c0c0" stroke-width="1"/>
<line x1="1117" y1="448.5" x2="1133" y2="448.5" stroke="#808080" stroke-width="1"/>
<polygon points="1119.5,440.5 1129.5,440.5 1124.5,445.8" fill="#808080" stroke="#000" stroke-width="1" shape-rendering="auto"/>
<rect x="1072.5" y="317.5" width="39" height="14" fill="#fff" stroke="#000"/>
</g>
<g style="filter:opacity(.999)">
<text y="22.5"><tspan class="d" x="1078" textLength="12" lengthAdjust="spacingAndGlyphs">10</tspan><tspan class="p" x="1091.26">,</tspan><tspan class="d" x="1096" textLength="18" lengthAdjust="spacingAndGlyphs">340</tspan></text>
<text y="62.5"><tspan class="d" x="1078" textLength="12" lengthAdjust="spacingAndGlyphs">10</tspan><tspan class="p" x="1091.26">,</tspan><tspan class="d" x="1096" textLength="18" lengthAdjust="spacingAndGlyphs">290</tspan></text>
<text y="102.5"><tspan class="d" x="1078" textLength="12" lengthAdjust="spacingAndGlyphs">10</tspan><tspan class="p" x="1091.26">,</tspan><tspan class="d" x="1096" textLength="18" lengthAdjust="spacingAndGlyphs">240</tspan></text>
<text y="139.5"><tspan class="d" x="1078" textLength="12" lengthAdjust="spacingAndGlyphs">10</tspan><tspan class="p" x="1091.26">,</tspan><tspan class="d" x="1096" textLength="18" lengthAdjust="spacingAndGlyphs">195</tspan></text>
<text y="179.5"><tspan class="d" x="1078" textLength="12" lengthAdjust="spacingAndGlyphs">10</tspan><tspan class="p" x="1091.26">,</tspan><tspan class="d" x="1096" textLength="18" lengthAdjust="spacingAndGlyphs">145</tspan></text>
<text y="216.5"><tspan class="d" x="1078" textLength="12" lengthAdjust="spacingAndGlyphs">10</tspan><tspan class="p" x="1091.26">,</tspan><tspan class="d" x="1096" textLength="18" lengthAdjust="spacingAndGlyphs">100</tspan></text>
<text y="257.5"><tspan class="d" x="1078" textLength="18" lengthAdjust="spacingAndGlyphs">260</tspan><tspan class="p" x="1097.26">.</tspan><tspan class="d" x="1102" textLength="12" lengthAdjust="spacingAndGlyphs">00</tspan></text>
<text y="294.5"><tspan class="d" x="1078" textLength="18" lengthAdjust="spacingAndGlyphs">115</tspan><tspan class="p" x="1097.26">.</tspan><tspan class="d" x="1102" textLength="12" lengthAdjust="spacingAndGlyphs">00</tspan></text>
<text y="356.5"><tspan class="d" x="1078" textLength="12" lengthAdjust="spacingAndGlyphs">34</tspan><tspan class="p" x="1091.26">.</tspan><tspan class="d" x="1096" textLength="12" lengthAdjust="spacingAndGlyphs">50</tspan></text>
<text y="393.5"><tspan class="d" x="1078" textLength="12" lengthAdjust="spacingAndGlyphs">13</tspan><tspan class="p" x="1091.26">.</tspan><tspan class="d" x="1096" textLength="12" lengthAdjust="spacingAndGlyphs">00</tspan></text>
<text y="457.5"><tspan class="d" x="1078" textLength="18" lengthAdjust="spacingAndGlyphs">100</tspan><tspan class="p" x="1097.26">.</tspan><tspan class="d" x="1102" textLength="12" lengthAdjust="spacingAndGlyphs">00</tspan></text>
<text y="494.5"><tspan class="d" x="1078" textLength="12" lengthAdjust="spacingAndGlyphs">50</tspan><tspan class="p" x="1091.26">.</tspan><tspan class="d" x="1096" textLength="12" lengthAdjust="spacingAndGlyphs">00</tspan></text>
<text y="328.5"><tspan class="x" x="1074.6" y="330.5">×</tspan> <tspan y="328.5"><tspan class="d" x="1092" textLength="18" lengthAdjust="spacingAndGlyphs">100</tspan></tspan></text>
<text y="553.5"><tspan class="d" x="11" textLength="12" lengthAdjust="spacingAndGlyphs">02</tspan><tspan class="p" x="24.26">:</tspan><tspan class="d" x="29" textLength="12" lengthAdjust="spacingAndGlyphs">40</tspan></text>
<text y="553.5"><tspan class="d" x="59" textLength="12" lengthAdjust="spacingAndGlyphs">09</tspan><tspan class="p" x="72.26">:</tspan><tspan class="d" x="77" textLength="12" lengthAdjust="spacingAndGlyphs">20</tspan></text>
<text y="553.5"><tspan class="d" x="155" textLength="12" lengthAdjust="spacingAndGlyphs">10</tspan><tspan class="p" x="168.26">:</tspan><tspan class="d" x="173" textLength="12" lengthAdjust="spacingAndGlyphs">40</tspan></text>
<text y="553.5"><tspan class="d" x="251" textLength="12" lengthAdjust="spacingAndGlyphs">12</tspan><tspan class="p" x="264.26">:</tspan><tspan class="d" x="269" textLength="12" lengthAdjust="spacingAndGlyphs">00</tspan></text>
<text y="553.5"><tspan class="d" x="347" textLength="12" lengthAdjust="spacingAndGlyphs">13</tspan><tspan class="p" x="360.26">:</tspan><tspan class="d" x="365" textLength="12" lengthAdjust="spacingAndGlyphs">20</tspan></text>
<text y="553.5"><tspan class="d" x="443" textLength="12" lengthAdjust="spacingAndGlyphs">14</tspan><tspan class="p" x="456.26">:</tspan><tspan class="d" x="461" textLength="12" lengthAdjust="spacingAndGlyphs">40</tspan></text>
<text y="553.5"><tspan class="d" x="551" textLength="12" lengthAdjust="spacingAndGlyphs">17</tspan><tspan class="p" x="564.26">:</tspan><tspan class="d" x="569" textLength="12" lengthAdjust="spacingAndGlyphs">20</tspan></text>
<text y="553.5"><tspan class="d" x="647" textLength="12" lengthAdjust="spacingAndGlyphs">18</tspan><tspan class="p" x="660.26">:</tspan><tspan class="d" x="665" textLength="12" lengthAdjust="spacingAndGlyphs">40</tspan></text>
<text y="553.5"><tspan class="d" x="743" textLength="12" lengthAdjust="spacingAndGlyphs">20</tspan><tspan class="p" x="756.26">:</tspan><tspan class="d" x="761" textLength="12" lengthAdjust="spacingAndGlyphs">00</tspan></text>
<text y="553.5"><tspan class="d" x="839" textLength="12" lengthAdjust="spacingAndGlyphs">21</tspan><tspan class="p" x="852.26">:</tspan><tspan class="d" x="857" textLength="12" lengthAdjust="spacingAndGlyphs">20</tspan></text>
<text y="553.5"><tspan class="d" x="935" textLength="12" lengthAdjust="spacingAndGlyphs">22</tspan><tspan class="p" x="948.26">:</tspan><tspan class="d" x="953" textLength="12" lengthAdjust="spacingAndGlyphs">40</tspan></text>
<text y="553.5"><tspan class="d" x="1031" textLength="12" lengthAdjust="spacingAndGlyphs">12</tspan><tspan class="p" x="1044.26">/</tspan><tspan class="d" x="1049" textLength="12" lengthAdjust="spacingAndGlyphs">27</tspan></text>
</g>
<g shape-rendering="crispEdges">
<rect x="0" y="566" width="1131" height="5" fill="url(#chk)"/>
<rect x="0" y="566" width="16" height="5" fill="#ececec"/>
<rect x="0" y="566" width="15" height="1" fill="#e3e3e3"/>
<rect x="0" y="567" width="14" height="1" fill="#ffffff"/>
<rect x="0" y="568" width="1" height="3" fill="#ffffff"/>
<rect x="14" y="566" width="1" height="5" fill="#909090"/>
<rect x="15" y="566" width="1" height="5" fill="#404040"/>
<rect x="351" y="566" width="276" height="5" fill="#ececec"/>
<rect x="351" y="566" width="275" height="1" fill="#e3e3e3"/>
<rect x="351" y="567" width="274" height="1" fill="#ffffff"/>
<rect x="351" y="568" width="1" height="3" fill="#ffffff"/>
<rect x="625" y="566" width="1" height="5" fill="#909090"/>
<rect x="626" y="566" width="1" height="5" fill="#404040"/>
<rect x="792" y="566" width="17" height="5" fill="#ececec"/>
<rect x="792" y="566" width="16" height="1" fill="#e3e3e3"/>
<rect x="792" y="567" width="15" height="1" fill="#ffffff"/>
<rect x="792" y="568" width="1" height="3" fill="#ffffff"/>
<rect x="807" y="566" width="1" height="5" fill="#909090"/>
<rect x="808" y="566" width="1" height="5" fill="#404040"/>
<rect x="809" y="566" width="120" height="5" fill="#f0f0f0"/>
<rect x="814" y="570" width="5" height="1" fill="#a0a0a0"/>
<rect x="819" y="568" width="4" height="3" fill="#fafafa"/>
<rect x="823" y="568" width="1" height="3" fill="#a0a0a0"/>
<rect x="823" y="570" width="100" height="1" fill="#a0a0a0"/>
<rect x="923" y="566" width="1" height="5" fill="#ffffff"/>
<rect x="929" y="566" width="17" height="5" fill="#e0e0e0"/>
<rect x="929" y="566" width="17" height="1" fill="#909090"/>
<rect x="929" y="567" width="1" height="4" fill="#909090"/>
<rect x="930" y="567" width="16" height="1" fill="#ffffff"/>
<rect x="930" y="568" width="1" height="3" fill="#ffffff"/>
<rect x="945" y="568" width="1" height="3" fill="#ffffff"/>
<rect x="936" y="569" width="1" height="2" fill="#002080"/>
<rect x="940" y="569" width="2" height="2" fill="#002080"/>
<rect x="946" y="566" width="17" height="5" fill="#e0e0e0"/>
<rect x="946" y="566" width="17" height="1" fill="#909090"/>
<rect x="946" y="567" width="1" height="4" fill="#909090"/>
<rect x="947" y="567" width="16" height="1" fill="#ffffff"/>
<rect x="947" y="568" width="1" height="3" fill="#ffffff"/>
<rect x="962" y="568" width="1" height="3" fill="#ffffff"/>
<rect x="954" y="569" width="2" height="2" fill="#000"/>
<rect x="963" y="566" width="17" height="5" fill="#e0e0e0"/>
<rect x="963" y="566" width="17" height="1" fill="#909090"/>
<rect x="963" y="567" width="1" height="4" fill="#909090"/>
<rect x="964" y="567" width="16" height="1" fill="#ffffff"/>
<rect x="964" y="568" width="1" height="3" fill="#ffffff"/>
<rect x="979" y="568" width="1" height="3" fill="#ffffff"/>
<rect x="980" y="566" width="17" height="5" fill="#e0e0e0"/>
<rect x="980" y="566" width="17" height="1" fill="#909090"/>
<rect x="980" y="567" width="1" height="4" fill="#909090"/>
<rect x="981" y="567" width="16" height="1" fill="#ffffff"/>
<rect x="981" y="568" width="1" height="3" fill="#ffffff"/>
<rect x="996" y="568" width="1" height="3" fill="#ffffff"/>
<rect x="988" y="569" width="2" height="2" fill="#002080"/>
<rect x="997" y="566" width="17" height="5" fill="#e0e0e0"/>
<rect x="997" y="566" width="17" height="1" fill="#909090"/>
<rect x="997" y="567" width="1" height="4" fill="#909090"/>
<rect x="998" y="567" width="16" height="1" fill="#ffffff"/>
<rect x="998" y="568" width="1" height="3" fill="#ffffff"/>
<rect x="1013" y="568" width="1" height="3" fill="#ffffff"/>
<rect x="1014" y="566" width="17" height="5" fill="#e0e0e0"/>
<rect x="1014" y="566" width="17" height="1" fill="#909090"/>
<rect x="1014" y="567" width="1" height="4" fill="#909090"/>
<rect x="1015" y="567" width="16" height="1" fill="#ffffff"/>
<rect x="1015" y="568" width="1" height="3" fill="#ffffff"/>
<rect x="1030" y="568" width="1" height="3" fill="#ffffff"/>
<rect x="1022" y="570" width="1" height="1" fill="#002080"/>
<rect x="1031" y="566" width="17" height="5" fill="#e0e0e0"/>
<rect x="1031" y="566" width="17" height="1" fill="#909090"/>
<rect x="1031" y="567" width="1" height="4" fill="#909090"/>
<rect x="1032" y="567" width="16" height="1" fill="#ffffff"/>
<rect x="1032" y="568" width="1" height="3" fill="#ffffff"/>
<rect x="1047" y="568" width="1" height="3" fill="#ffffff"/>
<rect x="1037" y="569" width="5" height="2" fill="#000"/>
<rect x="1048" y="566" width="17" height="5" fill="#e0e0e0"/>
<rect x="1048" y="566" width="17" height="1" fill="#909090"/>
<rect x="1048" y="567" width="1" height="4" fill="#909090"/>
<rect x="1049" y="567" width="16" height="1" fill="#ffffff"/>
<rect x="1049" y="568" width="1" height="3" fill="#ffffff"/>
<rect x="1064" y="568" width="1" height="3" fill="#ffffff"/>
<rect x="1056" y="569" width="2" height="2" fill="#000"/>
<rect x="1065" y="566" width="17" height="5" fill="#e0e0e0"/>
<rect x="1065" y="566" width="17" height="1" fill="#909090"/>
<rect x="1065" y="567" width="1" height="4" fill="#909090"/>
<rect x="1066" y="567" width="16" height="1" fill="#ffffff"/>
<rect x="1066" y="568" width="1" height="3" fill="#ffffff"/>
<rect x="1081" y="568" width="1" height="3" fill="#ffffff"/>
<rect x="1071" y="569" width="5" height="2" fill="#000"/>
<rect x="1082" y="566" width="17" height="5" fill="#e0e0e0"/>
<rect x="1082" y="566" width="17" height="1" fill="#909090"/>
<rect x="1082" y="567" width="1" height="4" fill="#909090"/>
<rect x="1083" y="567" width="16" height="1" fill="#ffffff"/>
<rect x="1083" y="568" width="1" height="3" fill="#ffffff"/>
<rect x="1098" y="568" width="1" height="3" fill="#ffffff"/>
<rect x="1088" y="570" width="5" height="1" fill="#000"/>
<rect x="1099" y="566" width="17" height="5" fill="#e0e0e0"/>
<rect x="1099" y="566" width="17" height="1" fill="#909090"/>
<rect x="1099" y="567" width="1" height="4" fill="#909090"/>
<rect x="1100" y="567" width="16" height="1" fill="#ffffff"/>
<rect x="1100" y="568" width="1" height="3" fill="#ffffff"/>
<rect x="1115" y="568" width="1" height="3" fill="#ffffff"/>
<rect x="1105" y="570" width="1" height="1" fill="#000"/>
<rect x="1109" y="570" width="1" height="1" fill="#000"/>
<rect x="1116" y="566" width="17" height="5" fill="#e0e0e0"/>
<rect x="1116" y="566" width="17" height="1" fill="#909090"/>
<rect x="1116" y="567" width="1" height="4" fill="#909090"/>
<rect x="1117" y="567" width="16" height="1" fill="#ffffff"/>
<rect x="1117" y="568" width="1" height="3" fill="#ffffff"/>
<rect x="1132" y="568" width="1" height="3" fill="#ffffff"/>
<rect x="1122" y="570" width="2" height="1" fill="#002080"/>
<rect x="1126" y="570" width="2" height="1" fill="#002080"/>
</g>
</g></svg></body></html>
